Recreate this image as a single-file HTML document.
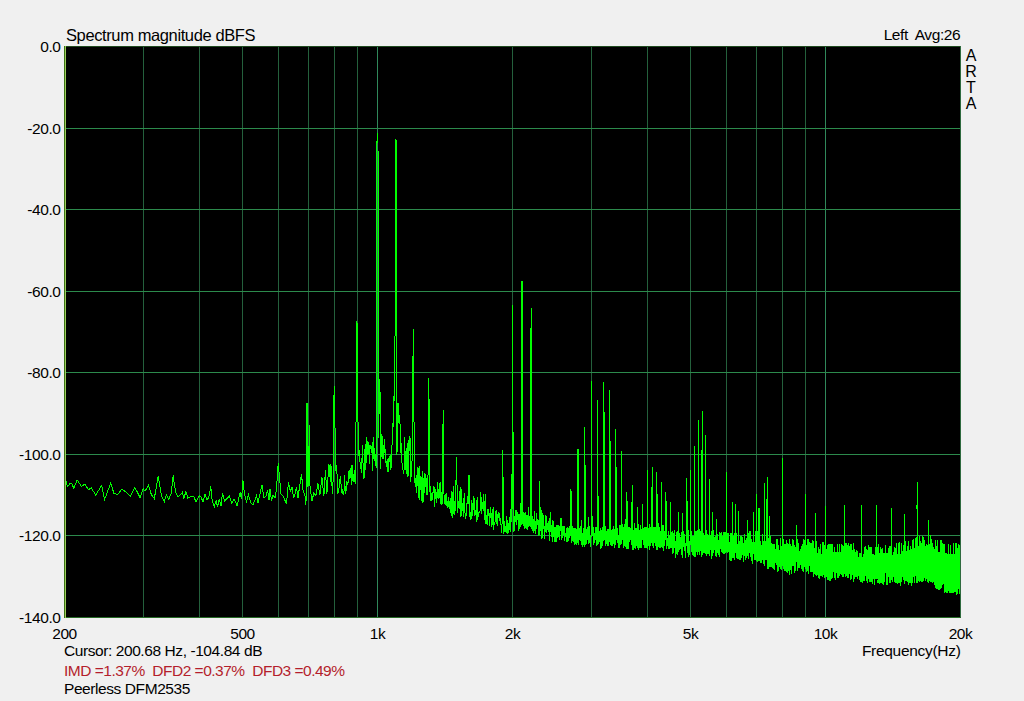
<!DOCTYPE html>
<html><head><meta charset="utf-8"><style>
html,body{margin:0;padding:0;background:#f0f0f0;width:1024px;height:701px;overflow:hidden}
body{position:relative;font-family:"Liberation Sans",sans-serif;font-size:15.5px;line-height:15.5px;letter-spacing:-0.42px;color:#000}
.t{position:absolute;white-space:pre}
.yl{position:absolute;right:963.5px;white-space:pre;text-align:right}
.xl{position:absolute;top:626.3px;width:80px;text-align:center}
.vg{stroke:#24603c;stroke-width:1}
.vd{stroke:#30885a;stroke-width:1}
.hg{stroke:#2c8a4c;stroke-width:1}
.tr{fill:none;stroke:#00ff00;stroke-width:1;shape-rendering:crispEdges}
</style></head><body>
<svg width="1024" height="701" viewBox="0 0 1024 701" style="position:absolute;left:0;top:0">
<rect x="64" y="46" width="897" height="572" fill="#000"/>
<line x1="143.5" y1="46" x2="143.5" y2="617" class="vg"/><line x1="199.5" y1="46" x2="199.5" y2="617" class="vg"/><line x1="242.5" y1="46" x2="242.5" y2="617" class="vg"/><line x1="278.5" y1="46" x2="278.5" y2="617" class="vg"/><line x1="308.5" y1="46" x2="308.5" y2="617" class="vg"/><line x1="334.5" y1="46" x2="334.5" y2="617" class="vg"/><line x1="357.5" y1="46" x2="357.5" y2="617" class="vg"/><line x1="377.5" y1="46" x2="377.5" y2="617" class="vd"/><line x1="512.5" y1="46" x2="512.5" y2="617" class="vg"/><line x1="591.5" y1="46" x2="591.5" y2="617" class="vg"/><line x1="647.5" y1="46" x2="647.5" y2="617" class="vg"/><line x1="690.5" y1="46" x2="690.5" y2="617" class="vg"/><line x1="726.5" y1="46" x2="726.5" y2="617" class="vg"/><line x1="756.5" y1="46" x2="756.5" y2="617" class="vg"/><line x1="782.5" y1="46" x2="782.5" y2="617" class="vg"/><line x1="805.5" y1="46" x2="805.5" y2="617" class="vg"/><line x1="825.5" y1="46" x2="825.5" y2="617" class="vd"/><line x1="64" y1="128.5" x2="961" y2="128.5" class="hg"/><line x1="64" y1="209.5" x2="961" y2="209.5" class="hg"/><line x1="64" y1="291.5" x2="961" y2="291.5" class="hg"/><line x1="64" y1="372.5" x2="961" y2="372.5" class="hg"/><line x1="64" y1="454.5" x2="961" y2="454.5" class="hg"/><line x1="64" y1="535.5" x2="961" y2="535.5" class="hg"/>
<rect x="64" y="46" width="897" height="1" fill="#1f4a1f"/>
<rect x="960" y="46" width="1" height="572" fill="#2f6a3f"/>
<rect x="64" y="617" width="897" height="1" fill="#266a26"/>
<rect x="64" y="46" width="1" height="572" fill="#3c7414"/><rect x="65" y="46" width="1" height="572" fill="#9ccc5c"/>
<g clip-path="url(#clp)"><path class="tr" d="M66.0,481.0 67.4,486.4 70.3,483.4 71.8,483.4 73.7,488.3 77.1,480.0 81.5,486.4 84.9,483.9 88.4,489.8 91.3,487.8 95.7,495.2 101.6,485.4 104.5,499.6 110.8,482.9 113.8,493.2 117.7,494.7 121.6,489.3 125.5,491.7 130.4,496.6 134.8,487.3 140.1,497.6 143.1,488.8 145.0,491.2 148.4,485.4 151.4,494.7 154.3,498.6 158.2,476.1 161.6,496.1 162.0,497.1 164.4,501.5 166.3,494.7 168.8,499.1 171.2,493.2 173.2,475.1 174.6,486.4 176.1,493.2 178.1,497.1 181.0,494.2 182.5,492.2 183.9,498.6 185.9,491.2 187.8,498.1 191.2,496.1 193.7,496.6 196.1,502.0 199.1,495.6 201.0,497.1 203.0,502.0 204.9,494.2 206.9,499.6 208.8,497.6 210.8,486.4 212.2,501.0 214.2,506.9 216.2,500.5 217.6,507.4 219.1,499.1 221.0,505.9 222.5,493.2 224.5,501.0 226.4,499.1 229.3,496.1 231.8,503.0 234.2,499.1 237.1,505.9 240.1,492.2 241.5,499.1 243.0,480.5 244.5,494.2 246.4,502.0 248.4,494.7 250.8,503.0 252.8,504.9 255.0,499.9 256.5,495.9 258.0,502.9 260.0,493.9 262.0,485.0 264.0,497.9 266.0,495.9 267.5,490.0 269.0,499.9 270.0,489.0 271.5,500.9 273.0,494.9 275.0,497.9 276.5,489.0 278.2,463.0 279.5,478.0 281.0,493.9 283.5,496.9 286.5,503.9 288.5,482.0 290.5,491.9 292.0,487.0 293.5,497.9 295.0,493.9 296.5,487.0 298.0,497.9 299.5,487.0 301.5,474.0 303.0,490.0 305.0,495.9 305.9,504.9 306.6,484.0 307.0,403.0 307.4,487.0 308.7,484.0 309.2,425.0 309.7,484.0 310.9,492.9 311.9,500.9 313.9,492.9 315.9,495.9 317.9,483.0 319.9,494.9 321.9,477.0 323.9,495.9 325.4,470.0 326.9,493.9 328.9,464.0 330.4,482.0 330.9,464.0 332.4,493.9 333.2,478.0 333.5,419.7 334.2,386.5 334.9,420.0 335.6,471.4 336.3,464.8 337.0,473.8 337.7,493.5 338.4,491.9 339.1,487.5 339.8,480.9 340.5,476.1 341.2,486.4 341.9,491.6 342.5,490.4 343.2,495.0 343.9,494.4 344.6,474.8 345.3,493.3 345.9,492.8 346.6,481.5 347.3,482.4 347.9,484.5 348.6,472.0 349.3,470.4 349.9,478.7 350.6,474.2 351.2,464.7 351.9,485.3 352.5,465.3 353.2,482.1 353.8,474.9 354.5,470.4 355.1,484.1 355.7,463.5 356.4,373.9 357.0,321.4 357.6,372.6 358.3,455.7 358.9,452.3 359.5,450.5 360.2,465.9 360.8,466.9 361.4,472.9 362.0,457.6 362.6,444.9 363.2,470.4 363.9,477.7 364.5,477.3 365.1,443.7 365.7,470.0 366.3,456.9 366.9,437.1 367.5,454.9 368.1,447.3 368.7,442.0 369.3,464.0 369.9,444.6 370.5,448.1 371.1,447.8 371.7,452.9 372.2,441.9 372.8,470.6 373.4,437.0 374.0,447.9 374.6,448.5 375.2,466.2 375.7,454.0 376.3,467.7 376.9,143.0 377.4,133.0 378.0,143.0 378.6,437.7 379.2,403.1 379.7,379.0 380.3,403.6 380.8,469.0 381.4,433.7 382.0,435.8 382.5,458.5 383.1,445.1 383.6,459.0 384.2,449.5 384.7,439.5 385.3,457.4 385.8,460.4 386.4,467.2 386.9,460.9 387.5,459.8 388.0,472.2 388.5,458.3 389.1,459.9 389.6,461.6 390.1,455.2 390.7,469.8 391.2,467.4 391.7,465.1 392.3,426.0 392.8,423.1 393.3,427.3 393.9,401.2 394.4,379.6 394.9,400.5 395.4,144.0 395.9,139.0 396.5,144.0 397.0,454.5 397.5,413.0 398.0,402.7 398.5,414.2 399.0,422.7 399.5,414.7 400.0,423.9 400.6,424.6 401.1,457.9 401.6,443.4 402.1,467.0 402.6,468.9 403.1,470.7 403.6,473.5 404.1,469.5 404.6,437.5 405.1,463.6 405.6,451.2 406.1,473.6 406.5,448.3 407.0,453.4 407.5,443.5 408.0,477.1 408.5,459.2 409.0,440.4 409.5,450.7 410.0,436.2 410.4,478.3 410.9,482.2 411.4,462.8 411.9,466.8 412.4,443.4 412.8,376.7 413.3,329.1 413.8,377.8 414.2,461.4 414.7,478.8 415.2,486.2 415.7,486.4 416.1,475.1 416.6,493.1 417.1,484.9 417.5,480.6 418.0,466.9 418.5,497.9 418.9,482.6 419.4,499.6 419.8,466.0 420.3,488.5 420.8,479.6 421.2,500.3 421.7,500.4 422.1,470.8 422.6,489.7 423.0,503.3 423.5,477.6 423.9,494.3 424.4,487.1 424.8,473.2 425.3,482.1 425.7,474.1 426.2,494.5 426.6,478.3 427.0,483.7 427.5,494.9 427.9,492.9 428.4,417.9 428.8,378.0 429.2,418.2 429.7,482.9 430.1,494.9 430.5,485.8 431.0,501.2 431.4,499.4 431.8,492.6 432.3,499.6 432.7,492.7 433.1,492.6 433.6,486.8 434.0,487.3 434.4,494.2 434.8,507.3 435.3,488.9 435.7,497.9 436.1,493.6 436.5,502.8 437.0,492.5 437.4,498.2 437.8,482.2 438.2,495.4 438.6,498.3 439.0,497.9 439.5,482.6 439.9,484.1 440.3,483.4 440.7,503.5 441.1,492.4 441.5,497.1 441.9,504.6 442.3,501.0 442.8,441.8 443.2,410.0 443.6,441.9 444.0,494.3 444.4,503.7 444.8,496.2 445.2,494.1 445.6,504.6 446.0,498.4 446.4,492.8 446.8,505.8 447.2,501.4 447.6,506.8 448.0,507.6 448.4,497.4 448.8,500.3 449.2,501.9 449.6,509.4 450.0,503.0 450.4,513.2 450.7,498.5 451.1,503.8 451.5,516.0 451.9,492.2 452.3,492.4 452.7,518.0 453.1,511.7 453.5,514.0 453.8,486.4 454.2,514.8 454.6,500.6 455.0,505.6 455.4,510.8 455.8,494.4 456.1,474.0 456.5,456.8 456.9,474.1 457.3,513.4 457.7,486.1 458.0,501.4 458.4,501.7 458.8,507.6 459.2,508.9 459.5,507.1 459.9,491.0 460.3,516.8 460.7,488.4 461.0,488.8 461.4,505.4 461.8,516.0 462.1,509.8 462.5,510.7 462.9,503.1 463.3,517.4 463.6,497.8 464.0,514.1 464.3,492.9 464.7,500.6 465.1,516.7 465.4,513.0 465.8,519.2 466.2,507.7 466.5,516.2 466.9,503.2 467.2,503.1 467.6,496.9 468.0,496.8 468.3,503.6 468.7,486.0 469.0,474.8 469.4,486.0 469.7,517.0 470.1,512.4 470.5,517.3 470.8,519.6 471.2,517.6 471.5,500.2 471.9,510.8 472.2,515.3 472.6,515.3 472.9,503.3 473.3,506.8 473.6,496.1 474.0,510.3 474.3,497.8 474.7,516.1 475.0,509.7 475.3,514.0 475.7,513.2 476.0,512.1 476.4,522.1 476.7,509.2 477.1,497.5 477.4,519.9 477.7,503.0 478.1,517.2 478.4,514.2 478.8,513.1 479.1,511.5 479.4,512.6 479.8,512.2 480.1,511.0 480.5,498.6 480.8,492.0 481.1,498.8 481.5,508.4 481.8,513.8 482.1,502.4 482.5,506.3 482.8,503.1 483.1,510.8 483.5,499.6 483.8,494.3 484.1,503.7 484.4,519.6 484.8,506.0 485.1,510.8 485.4,494.5 485.8,523.9 486.1,515.7 486.4,524.3 486.7,522.2 487.1,513.0 487.4,518.2 487.7,525.2 488.0,508.8 488.4,511.9 488.7,515.6 489.0,513.5 489.3,514.2 489.6,526.4 490.0,517.7 490.3,514.3 490.6,513.8 490.9,506.9 491.2,523.4 491.6,512.6 491.9,527.2 492.2,521.1 492.5,513.6 492.8,509.1 493.1,508.6 493.5,521.2 493.8,529.9 494.1,523.0 494.4,523.5 494.7,522.7 495.0,522.5 495.3,519.3 495.6,515.0 496.0,511.4 496.3,511.2 496.6,516.9 496.9,524.2 497.2,520.0 497.5,513.8 497.8,525.9 498.1,514.7 498.4,513.7 498.7,515.0 499.0,517.0 499.3,520.6 499.6,513.8 499.9,513.6 500.2,524.2 500.6,523.3 500.9,524.7 501.2,526.6 501.5,533.2 501.8,530.4 502.1,521.2 502.4,475.4 502.7,450.0 503.0,475.5 503.3,511.8 503.6,534.4 503.9,516.0 504.2,527.7 504.5,522.3 504.7,526.6 505.0,532.3 505.3,529.0 505.6,526.0 505.9,526.9 506.2,525.4 506.5,533.0 506.8,516.1 507.1,521.5 507.4,533.5 507.7,527.0 508.0,522.9 508.3,524.7 508.6,532.6 508.9,525.7 509.1,529.5 509.4,521.1 509.7,519.1 510.0,516.8 510.3,532.3 510.6,516.0 510.9,520.2 511.2,491.2 511.5,474.0 511.7,491.1 512.0,521.5 512.3,381.5 512.6,305.5 512.9,381.4 513.2,516.5 513.4,519.2 513.7,531.6 514.0,519.9 514.3,527.6 514.6,531.4 514.9,516.3 515.1,521.6 515.4,515.8 515.7,512.8 516.0,510.1 516.3,516.1 516.5,519.8 516.8,524.7 517.1,517.5 517.4,512.5 517.7,517.1 517.9,516.2 518.2,514.5 518.5,528.2 518.8,530.5 519.0,513.6 519.3,522.0 519.6,523.8 519.9,529.3 520.1,522.3 520.4,503.2 520.7,514.5 521.0,526.5 521.2,515.9 521.5,523.2 521.8,364.6 522.0,281.0 522.3,364.6 522.6,518.9 522.9,520.1 523.1,525.9 523.4,512.5 523.7,524.4 523.9,519.3 524.2,513.0 524.5,519.5 524.7,524.0 525.0,529.0 525.3,517.6 525.5,525.6 525.8,511.7 526.1,527.8 526.3,522.3 526.6,529.3 526.9,514.7 527.1,515.7 527.4,515.0 527.7,529.6 527.9,519.9 528.2,507.1 528.5,518.7 528.7,527.2 529.0,526.3 529.2,525.2 529.5,516.4 529.8,522.3 530.0,516.7 530.3,516.8 530.5,526.7 530.8,383.2 531.1,307.7 531.3,383.3 531.6,518.2 531.8,522.2 532.1,531.4 532.4,521.0 532.6,517.7 532.9,518.3 533.1,520.2 533.4,522.0 533.6,523.7 533.9,532.5 534.1,511.1 534.4,518.4 534.7,531.3 534.9,521.4 535.2,521.6 535.4,534.0 535.7,527.9 535.9,527.0 536.2,529.0 536.4,513.4 536.7,527.0 536.9,520.5 537.2,520.8 537.4,523.5 537.7,524.5 537.9,519.8 538.2,520.1 538.4,534.7 538.7,534.4 538.9,535.5 539.2,534.6 539.4,497.1 539.7,480.8 539.9,497.2 540.2,525.8 540.4,526.1 540.7,530.2 540.9,530.9 541.2,527.3 541.4,521.9 541.6,510.1 541.9,538.7 542.1,537.4 542.4,532.2 542.6,513.5 542.9,534.9 543.1,515.4 543.4,527.5 543.6,529.2 543.8,519.2 544.1,529.0 544.3,531.4 544.6,528.5 544.8,539.0 545.1,529.3 545.3,523.2 545.5,520.1 545.8,530.0 546.0,515.3 546.3,531.4 546.5,533.4 546.7,521.5 547.0,530.8 547.2,524.9 547.4,525.2 547.7,523.4 547.9,528.7 548.2,525.3 548.4,525.4 548.6,528.1 548.9,521.0 549.1,540.8 549.3,535.8 549.6,528.2 549.8,533.4 550.1,512.2 550.3,532.1 550.5,521.3 550.8,530.9 551.0,532.4 551.2,528.7 551.5,537.3 551.7,525.5 551.9,532.8 552.2,536.2 552.4,536.0 552.6,520.0 552.9,542.3 553.1,520.6 553.3,537.3 553.5,526.7 553.8,532.9 554.0,528.3 554.2,542.3 554.5,535.3 554.7,526.9 554.9,538.8 555.2,540.6 555.4,526.6 555.6,533.9 555.8,542.0 556.1,533.1 556.3,535.3 556.5,541.9 556.7,532.8 557.0,525.0 557.2,526.7 557.4,533.9 557.7,538.1 557.9,527.5 558.1,524.7 558.3,536.8 558.6,531.9 558.8,530.2 559.0,527.9 559.2,540.1 559.5,528.3 559.7,525.6 559.9,527.6 560.1,530.9 560.3,526.0 560.6,530.6 560.8,525.2 561.0,517.8 561.2,539.2 561.5,539.1 561.7,534.6 561.9,535.8 562.1,526.5 562.3,538.0 562.6,537.3 562.8,535.2 563.0,535.2 563.2,527.9 563.4,531.3 563.7,526.4 563.9,531.3 564.1,532.6 564.3,530.4 564.5,540.6 564.8,526.5 565.0,536.0 565.2,535.3 565.4,533.1 565.6,537.4 565.8,536.5 566.1,532.1 566.3,541.8 566.5,533.5 566.7,537.9 566.9,528.4 567.1,529.1 567.4,535.4 567.6,542.2 567.8,527.1 568.0,527.5 568.2,530.0 568.4,532.0 568.6,534.9 568.9,540.7 569.1,533.6 569.3,538.1 569.5,534.9 569.7,531.4 569.9,532.0 570.1,520.8 570.3,536.0 570.6,519.5 570.8,505.0 571.0,489.3 571.2,505.1 571.4,530.7 571.6,537.4 571.8,537.1 572.0,543.1 572.2,529.3 572.4,529.6 572.7,526.4 572.9,527.6 573.1,528.9 573.3,537.1 573.5,533.6 573.7,531.9 573.9,542.1 574.1,534.6 574.3,537.5 574.5,544.7 574.7,533.3 574.9,527.7 575.1,528.4 575.4,528.7 575.6,542.5 575.8,543.6 576.0,540.4 576.2,545.1 576.4,534.4 576.6,529.4 576.8,531.1 577.0,537.2 577.2,533.7 577.4,543.0 577.6,528.5 577.8,479.3 578.0,449.0 578.2,479.3 578.4,544.2 578.6,544.2 578.8,538.8 579.0,539.4 579.2,539.9 579.4,536.6 579.6,528.2 579.8,528.2 580.0,539.7 580.2,528.2 580.4,526.5 580.6,541.1 580.8,538.1 581.0,538.5 581.2,540.4 581.4,532.6 581.6,544.5 581.8,519.8 582.0,530.6 582.2,544.6 582.4,546.8 582.6,538.2 582.8,543.6 583.0,544.7 583.2,536.0 583.4,536.8 583.6,527.8 583.8,536.4 584.0,544.8 584.2,531.4 584.4,546.6 584.6,464.9 584.8,427.0 585.0,464.9 585.2,536.3 585.4,538.0 585.6,527.6 585.8,538.9 586.0,544.5 586.2,541.6 586.4,531.3 586.6,541.5 586.8,532.9 587.0,528.9 587.2,527.4 587.4,527.4 587.6,534.0 587.7,540.1 587.9,527.3 588.1,527.3 588.3,543.9 588.5,529.9 588.7,517.3 588.9,538.8 589.1,526.2 589.3,542.4 589.5,543.0 589.7,527.1 589.9,534.4 590.1,545.4 590.2,546.9 590.4,539.0 590.6,538.4 590.8,545.5 591.0,545.1 591.2,434.8 591.4,380.8 591.6,434.8 591.8,536.8 592.0,536.0 592.1,533.1 592.3,529.6 592.5,515.9 592.7,533.5 592.9,531.0 593.1,537.6 593.3,537.1 593.5,526.7 593.7,544.5 593.8,529.1 594.0,538.0 594.2,543.3 594.4,533.0 594.6,537.2 594.8,540.8 595.0,539.9 595.2,536.3 595.3,527.5 595.5,529.8 595.7,536.3 595.9,534.1 596.1,534.1 596.3,532.5 596.5,526.7 596.6,540.6 596.8,529.0 597.0,546.0 597.2,527.5 597.4,541.9 597.6,447.5 597.7,400.3 597.9,447.5 598.1,533.7 598.3,543.5 598.5,526.7 598.7,527.1 598.8,542.1 599.0,533.2 599.2,542.2 599.4,536.7 599.6,531.3 599.8,533.6 599.9,541.7 600.1,532.9 600.3,545.7 600.5,548.5 600.7,528.2 600.8,527.9 601.0,529.6 601.2,540.8 601.4,546.0 601.6,534.9 601.7,542.1 601.9,547.6 602.1,530.3 602.3,537.1 602.5,546.0 602.6,535.2 602.8,527.9 603.0,528.0 603.2,536.4 603.4,540.9 603.5,534.6 603.7,435.8 603.9,382.0 604.1,435.8 604.3,540.1 604.4,528.2 604.6,533.0 604.8,527.1 605.0,536.7 605.1,527.5 605.3,534.4 605.5,533.8 605.7,528.5 605.8,526.4 606.0,545.7 606.2,533.5 606.4,531.3 606.6,535.5 606.7,534.0 606.9,536.4 607.1,540.1 607.3,528.8 607.4,534.8 607.6,546.0 607.8,536.1 608.0,537.6 608.1,539.0 608.3,531.9 608.5,529.0 608.7,546.0 608.8,528.6 609.0,530.9 609.2,542.3 609.3,534.6 609.5,527.6 609.7,441.4 609.9,390.3 610.0,441.4 610.2,521.2 610.4,537.8 610.6,535.5 610.7,544.9 610.9,541.4 611.1,534.8 611.2,529.6 611.4,530.6 611.6,544.7 611.8,531.7 611.9,546.1 612.1,535.9 612.3,529.4 612.4,534.5 612.6,545.9 612.8,533.4 612.9,529.5 613.1,541.7 613.3,533.8 613.5,543.7 613.6,526.4 613.8,542.1 614.0,529.0 614.1,539.1 614.3,541.8 614.5,542.8 614.6,546.6 614.8,547.6 615.0,537.5 615.1,528.8 615.3,527.3 615.5,544.5 615.7,466.8 615.8,429.4 616.0,466.8 616.2,535.3 616.3,529.2 616.5,540.2 616.7,536.6 616.8,539.4 617.0,528.4 617.2,535.8 617.3,542.8 617.5,528.3 617.7,532.9 617.8,536.4 618.0,542.6 618.2,541.1 618.3,541.3 618.5,547.7 618.6,542.4 618.8,536.0 619.0,536.3 619.1,528.9 619.3,535.6 619.5,524.9 619.6,547.6 619.8,529.2 620.0,538.9 620.1,535.0 620.3,537.4 620.5,544.8 620.6,536.7 620.8,530.5 620.9,525.0 621.1,544.1 621.3,480.6 621.4,450.8 621.6,480.6 621.8,527.5 621.9,533.7 622.1,528.4 622.2,539.6 622.4,527.2 622.6,523.6 622.7,524.7 622.9,533.1 623.1,528.2 623.2,545.6 623.4,542.2 623.5,543.8 623.7,527.0 623.9,530.9 624.0,548.4 624.2,531.0 624.3,533.8 624.5,538.2 624.7,524.0 624.8,535.8 625.0,526.7 625.1,541.5 625.3,528.3 625.5,544.7 625.6,547.0 625.8,528.7 625.9,519.5 626.1,548.8 626.3,515.5 626.4,544.9 626.6,533.3 626.7,507.2 626.9,492.0 627.1,507.2 627.2,540.2 627.4,548.5 627.5,526.4 627.7,533.0 627.8,533.3 628.0,527.5 628.2,527.7 628.3,541.0 628.5,530.6 628.6,548.8 628.8,534.6 628.9,533.8 629.1,532.0 629.3,542.0 629.4,540.1 629.6,530.1 629.7,526.9 629.9,534.8 630.0,531.2 630.2,537.6 630.3,528.0 630.5,539.8 630.7,528.9 630.8,539.5 631.0,535.8 631.1,544.7 631.3,536.6 631.4,542.3 631.6,535.4 631.7,536.1 631.9,532.6 632.0,502.8 632.2,485.0 632.4,502.8 632.5,548.5 632.7,549.7 632.8,548.4 633.0,548.4 633.1,539.8 633.3,530.5 633.4,536.3 633.6,550.2 633.7,537.5 633.9,545.8 634.0,535.4 634.2,523.3 634.3,544.6 634.5,548.4 634.7,540.4 634.8,539.8 635.0,542.1 635.1,537.5 635.3,545.1 635.4,534.1 635.6,548.2 635.7,548.2 635.9,532.4 636.0,528.2 636.2,532.0 636.3,540.9 636.5,534.9 636.6,546.1 636.8,535.8 636.9,531.1 637.1,548.3 637.2,517.2 637.4,507.0 637.5,517.2 637.7,537.3 637.8,528.6 638.0,524.5 638.1,537.3 638.3,537.2 638.4,549.6 638.6,537.9 638.7,539.6 638.9,528.8 639.0,544.7 639.2,537.3 639.3,541.4 639.5,547.8 639.6,530.3 639.8,531.9 639.9,532.2 640.1,538.6 640.2,531.9 640.3,532.8 640.5,547.7 640.6,536.8 640.8,541.0 640.9,525.2 641.1,547.7 641.2,529.5 641.4,529.1 641.5,543.3 641.7,530.6 641.8,534.4 642.0,535.9 642.1,539.7 642.3,515.4 642.4,504.0 642.6,515.4 642.7,537.8 642.8,536.8 643.0,540.1 643.1,534.7 643.3,532.2 643.4,528.8 643.6,528.0 643.7,545.1 643.9,536.0 644.0,529.3 644.2,547.5 644.3,546.0 644.4,542.1 644.6,526.8 644.7,538.7 644.9,547.5 645.0,530.8 645.2,543.1 645.3,543.2 645.5,547.5 645.6,537.8 645.7,547.5 645.9,541.1 646.0,526.8 646.2,531.4 646.3,528.0 646.5,530.8 646.6,536.5 646.7,547.5 646.9,532.3 647.0,541.9 647.2,493.4 647.3,470.5 647.5,493.4 647.6,533.6 647.7,547.5 647.9,541.5 648.0,548.6 648.2,531.2 648.3,528.5 648.5,540.7 648.6,535.2 648.7,528.4 648.9,544.0 649.0,539.8 649.2,528.5 649.3,550.3 649.4,541.7 649.6,541.5 649.7,532.2 649.9,524.2 650.0,536.8 650.1,531.5 650.3,537.2 650.4,527.4 650.6,545.7 650.7,542.5 650.8,528.0 651.0,529.9 651.1,543.2 651.3,539.8 651.4,531.6 651.5,534.6 651.7,516.4 651.8,527.8 652.0,490.9 652.1,467.0 652.2,490.8 652.4,536.1 652.5,527.2 652.7,526.6 652.8,540.6 652.9,545.8 653.1,533.6 653.2,537.8 653.3,540.8 653.5,534.9 653.6,537.5 653.8,547.5 653.9,527.4 654.0,539.6 654.2,534.1 654.3,530.0 654.5,526.9 654.6,540.2 654.7,543.2 654.9,532.5 655.0,542.0 655.1,527.2 655.3,538.8 655.4,542.5 655.5,540.8 655.7,526.6 655.8,531.2 656.0,545.8 656.1,547.7 656.2,547.5 656.4,543.1 656.5,531.6 656.6,549.8 656.8,493.9 656.9,472.0 657.0,493.9 657.2,534.7 657.3,546.8 657.5,532.2 657.6,549.8 657.7,538.4 657.9,533.0 658.0,523.5 658.1,533.8 658.3,541.0 658.4,532.9 658.5,537.0 658.7,536.0 658.8,540.3 658.9,544.5 659.1,548.2 659.2,540.6 659.3,527.2 659.5,536.6 659.6,537.1 659.7,547.8 659.9,547.8 660.0,536.6 660.1,536.6 660.3,547.7 660.4,541.6 660.5,547.9 660.7,533.9 660.8,545.8 660.9,535.4 661.1,528.5 661.2,543.5 661.3,500.5 661.5,481.6 661.6,500.6 661.7,546.7 661.9,530.4 662.0,529.2 662.1,548.2 662.3,545.8 662.4,539.8 662.5,529.4 662.7,544.5 662.8,548.3 662.9,525.5 663.1,524.8 663.2,534.4 663.3,542.2 663.4,539.1 663.6,550.9 663.7,535.3 663.8,545.3 664.0,533.0 664.1,541.2 664.2,545.8 664.4,544.2 664.5,530.8 664.6,543.2 664.8,533.5 664.9,531.0 665.0,541.7 665.1,531.2 665.3,538.7 665.4,528.6 665.5,529.5 665.7,539.5 665.8,508.0 665.9,492.0 666.1,508.1 666.2,546.6 666.3,535.0 666.4,549.1 666.6,539.9 666.7,541.1 666.8,541.9 667.0,539.4 667.1,538.6 667.2,544.1 667.3,537.9 667.5,543.9 667.6,545.5 667.7,538.4 667.9,539.8 668.0,544.6 668.1,541.6 668.2,545.4 668.4,531.5 668.5,540.3 668.6,541.0 668.8,544.0 668.9,548.9 669.0,533.9 669.1,539.9 669.3,540.5 669.4,538.4 669.5,540.2 669.6,549.4 669.8,548.7 669.9,539.8 670.0,535.3 670.2,515.6 670.3,502.0 670.4,515.6 670.5,544.8 670.7,546.1 670.8,547.5 670.9,541.2 671.0,546.8 671.2,543.2 671.3,532.4 671.4,545.7 671.5,547.9 671.7,544.6 671.8,543.2 671.9,546.0 672.0,532.7 672.2,542.9 672.3,547.0 672.4,554.0 672.5,541.6 672.7,531.1 672.8,534.8 672.9,543.9 673.0,534.5 673.2,536.9 673.3,537.0 673.4,550.2 673.5,538.1 673.7,549.9 673.8,553.0 673.9,537.4 674.0,533.1 674.2,546.5 674.3,544.4 674.4,534.5 674.5,529.6 674.7,534.5 674.8,534.2 674.9,548.0 675.0,539.4 675.2,554.1 675.3,552.6 675.4,558.2 675.5,548.4 675.6,551.3 675.8,555.3 675.9,545.9 676.0,542.8 676.1,554.4 676.3,544.4 676.4,531.6 676.5,543.3 676.6,543.6 676.8,548.0 676.9,532.9 677.0,542.0 677.1,555.3 677.2,543.9 677.4,550.2 677.5,541.2 677.6,542.9 677.7,543.1 677.9,531.4 678.0,547.2 678.1,547.5 678.2,546.4 678.3,551.5 678.5,551.4 678.6,523.3 678.7,512.5 678.8,523.3 678.9,550.3 679.1,549.2 679.2,544.4 679.3,544.5 679.4,546.7 679.6,549.0 679.7,533.4 679.8,540.7 679.9,544.0 680.0,546.7 680.2,542.6 680.3,543.8 680.4,541.7 680.5,549.1 680.6,536.9 680.8,546.1 680.9,542.4 681.0,546.3 681.1,547.2 681.2,536.8 681.4,552.4 681.5,550.2 681.6,555.0 681.7,531.9 681.8,535.8 682.0,549.2 682.1,555.1 682.2,538.6 682.3,545.6 682.4,558.1 682.5,551.1 682.7,523.5 682.8,513.0 682.9,523.5 683.0,545.1 683.1,545.1 683.3,541.9 683.4,531.5 683.5,545.9 683.6,543.6 683.7,543.5 683.9,539.6 684.0,546.6 684.1,536.3 684.2,547.5 684.3,544.7 684.4,544.2 684.6,537.0 684.7,547.9 684.8,550.9 684.9,533.8 685.0,542.6 685.1,549.4 685.3,558.0 685.4,543.5 685.5,555.3 685.6,553.0 685.7,554.5 685.9,548.3 686.0,548.2 686.1,540.3 686.2,544.4 686.3,546.2 686.4,532.2 686.6,543.0 686.7,541.1 686.8,500.7 686.9,478.0 687.0,500.7 687.1,546.5 687.2,542.4 687.4,545.8 687.5,536.3 687.6,534.3 687.7,549.0 687.8,552.5 687.9,544.6 688.1,555.3 688.2,556.9 688.3,536.2 688.4,530.2 688.5,533.0 688.6,537.9 688.8,544.9 688.9,532.8 689.0,544.0 689.1,554.4 689.2,549.0 689.3,549.4 689.4,547.1 689.6,555.3 689.7,553.3 689.8,541.8 689.9,548.9 690.0,541.5 690.1,544.7 690.2,545.2 690.4,537.7 690.5,536.0 690.6,538.7 690.7,495.7 690.8,470.5 690.9,495.7 691.0,536.0 691.2,531.0 691.3,542.6 691.4,549.9 691.5,545.6 691.6,531.8 691.7,542.2 691.8,547.0 692.0,551.9 692.1,547.2 692.2,545.0 692.3,544.1 692.4,554.6 692.5,540.9 692.6,542.9 692.7,547.6 692.9,552.9 693.0,535.9 693.1,555.6 693.2,552.2 693.3,547.0 693.4,535.8 693.5,541.4 693.6,544.7 693.8,547.2 693.9,538.4 694.0,544.1 694.1,549.6 694.2,530.2 694.3,556.5 694.4,542.8 694.5,479.8 694.7,446.0 694.8,479.8 694.9,549.8 695.0,540.9 695.1,557.4 695.2,542.6 695.3,540.3 695.4,548.7 695.5,542.2 695.7,536.4 695.8,548.9 695.9,531.9 696.0,530.7 696.1,547.7 696.2,551.6 696.3,540.1 696.4,549.0 696.5,534.2 696.7,545.7 696.8,544.8 696.9,542.7 697.0,546.6 697.1,545.6 697.2,549.3 697.3,529.8 697.4,539.7 697.5,555.3 697.6,551.7 697.8,538.8 697.9,544.6 698.0,545.4 698.1,552.1 698.2,539.8 698.3,462.8 698.4,420.0 698.5,462.8 698.6,531.7 698.7,538.2 698.9,538.8 699.0,541.9 699.1,529.3 699.2,541.8 699.3,540.0 699.4,535.4 699.5,543.7 699.6,555.3 699.7,554.9 699.8,552.0 699.9,543.0 700.1,548.3 700.2,531.2 700.3,542.6 700.4,546.2 700.5,551.2 700.6,542.4 700.7,541.5 700.8,545.1 700.9,536.7 701.0,550.2 701.1,555.8 701.2,552.1 701.4,549.7 701.5,556.9 701.6,543.9 701.7,539.9 701.8,531.5 701.9,555.3 702.0,456.7 702.1,410.7 702.2,456.7 702.3,539.2 702.4,555.3 702.5,541.4 702.6,544.6 702.8,547.7 702.9,550.6 703.0,549.9 703.1,543.8 703.2,532.9 703.3,535.2 703.4,542.3 703.5,552.5 703.6,540.7 703.7,548.8 703.8,549.3 703.9,546.2 704.0,542.0 704.1,542.0 704.2,544.9 704.4,535.1 704.5,553.3 704.6,539.1 704.7,541.6 704.8,541.6 704.9,543.5 705.0,547.4 705.1,552.2 705.2,546.5 705.3,554.3 705.4,543.1 705.5,549.2 705.6,472.2 705.7,434.7 705.8,472.3 705.9,539.4 706.0,552.9 706.2,530.5 706.3,546.3 706.4,543.3 706.5,550.2 706.6,530.4 706.7,549.6 706.8,550.8 706.9,555.5 707.0,545.0 707.1,534.3 707.2,549.1 707.3,536.3 707.4,538.2 707.5,542.5 707.6,552.2 707.7,553.9 707.8,544.2 707.9,548.1 708.0,546.9 708.1,535.5 708.2,551.9 708.4,553.7 708.5,535.5 708.6,540.4 708.7,545.2 708.8,545.2 708.9,551.7 709.0,552.4 709.1,533.7 709.2,501.2 709.3,479.0 709.4,501.2 709.5,547.2 709.6,532.6 709.7,542.3 709.8,555.8 709.9,547.0 710.0,545.9 710.1,550.3 710.2,542.4 710.3,547.7 710.4,535.9 710.5,535.3 710.6,543.9 710.7,543.4 710.8,544.0 710.9,542.4 711.0,549.3 711.1,558.6 711.2,543.3 711.3,551.9 711.5,548.2 711.6,558.9 711.7,538.7 711.8,546.5 711.9,530.6 712.0,541.1 712.1,536.2 712.2,551.6 712.3,552.6 712.4,545.0 712.5,552.3 712.6,556.1 712.7,522.9 712.8,512.0 712.9,522.9 713.0,552.3 713.1,541.7 713.2,544.7 713.3,553.4 713.4,552.0 713.5,530.3 713.6,541.4 713.7,548.9 713.8,543.4 713.9,551.6 714.0,549.3 714.1,550.4 714.2,545.7 714.3,547.4 714.4,548.7 714.5,545.5 714.6,548.4 714.7,541.5 714.8,540.3 714.9,537.5 715.0,546.0 715.1,551.3 715.2,549.1 715.3,556.4 715.4,536.3 715.5,547.1 715.6,546.0 715.7,548.1 715.8,550.0 715.9,554.2 716.0,553.6 716.1,556.5 716.2,527.6 716.3,519.0 716.4,527.6 716.5,540.6 716.6,551.5 716.7,541.6 716.8,544.0 716.9,553.6 717.0,543.9 717.1,552.8 717.2,550.5 717.3,534.2 717.4,551.1 717.5,550.4 717.6,548.0 717.7,543.9 717.8,551.7 717.9,545.6 718.0,547.0 718.1,549.6 718.2,546.8 718.3,548.7 718.4,548.9 718.5,548.8 718.6,548.1 718.7,554.6 718.8,544.9 718.9,545.2 719.0,540.9 719.1,537.5 719.2,532.0 719.3,550.0 719.4,555.0 719.5,540.0 719.6,543.5 719.7,544.6 719.8,556.9 719.9,552.3 720.0,546.6 720.1,547.4 720.2,549.2 720.3,541.8 720.4,549.4 720.5,542.0 720.6,548.1 720.7,533.3 720.8,549.1 720.9,544.0 721.0,546.2 721.1,551.8 721.1,545.0 721.2,540.6 721.3,546.2 721.4,532.3 721.5,546.6 721.6,547.6 721.7,545.8 721.8,545.8 721.9,552.3 722.0,550.6 722.1,552.6 722.2,548.0 722.3,545.7 722.4,535.6 722.5,540.1 722.6,541.8 722.7,552.0 722.8,545.1 722.9,544.2 723.0,542.0 723.1,532.7 723.2,541.5 723.3,554.0 723.4,548.7 723.5,538.6 723.6,545.0 723.7,542.4 723.8,550.5 723.9,550.4 724.0,532.0 724.1,544.4 724.1,550.0 724.2,544.4 724.3,532.2 724.4,544.3 724.5,549.5 724.6,538.1 724.7,549.7 724.8,544.5 724.9,549.1 725.0,553.5 725.1,546.8 725.2,538.2 725.3,538.2 725.4,548.2 725.5,543.1 725.6,541.7 725.7,553.0 725.8,546.5 725.9,532.4 726.0,552.5 726.1,545.7 726.2,497.5 726.3,472.0 726.3,497.5 726.4,547.5 726.5,538.0 726.6,552.1 726.7,546.8 726.8,532.6 726.9,546.6 727.0,533.1 727.1,551.6 727.2,553.0 727.3,537.5 727.4,542.3 727.5,549.5 727.6,541.4 727.7,547.2 727.8,538.5 727.9,546.0 728.0,545.4 728.0,546.1 728.1,544.4 728.2,533.4 728.3,552.4 728.4,533.5 728.5,546.4 728.6,546.2 728.7,544.3 728.8,533.8 728.9,546.9 729.0,546.9 729.1,559.8 729.2,549.1 729.3,552.3 729.4,544.5 729.5,546.6 729.5,550.8 729.6,549.0 729.7,543.7 729.8,541.8 729.9,551.3 730.0,542.4 730.1,550.1 730.2,542.8 730.3,560.8 730.4,532.8 730.5,557.5 730.6,552.0 730.7,555.4 730.8,554.6 730.9,550.9 730.9,538.0 731.0,558.2 731.1,534.2 731.2,549.3 731.3,541.3 731.4,561.0 731.5,533.1 731.6,544.7 731.7,549.1 731.8,546.9 731.9,546.6 732.0,551.7 732.1,558.3 732.1,544.6 732.2,539.5 732.3,550.9 732.4,542.8 732.5,517.2 732.6,502.0 732.7,517.2 732.8,558.4 732.9,545.5 733.0,558.4 733.1,549.4 733.2,546.8 733.2,554.4 733.3,535.7 733.4,547.4 733.5,546.9 733.6,558.3 733.7,553.2 733.8,538.9 733.9,547.7 734.0,544.4 734.1,545.5 734.2,559.7 734.3,546.1 734.3,546.5 734.4,558.6 734.5,540.1 734.6,549.5 734.7,533.1 734.8,541.1 734.9,542.7 735.0,542.7 735.1,553.2 735.2,543.0 735.3,551.3 735.3,542.4 735.4,542.1 735.5,551.1 735.6,518.6 735.7,504.0 735.8,518.6 735.9,550.0 736.0,543.6 736.1,542.6 736.2,543.0 736.2,550.3 736.3,539.1 736.4,558.0 736.5,557.2 736.6,533.4 736.7,547.6 736.8,545.2 736.9,537.7 737.0,542.9 737.1,558.9 737.1,545.5 737.2,555.1 737.3,553.1 737.4,546.4 737.5,547.6 737.6,544.4 737.7,549.3 737.8,552.0 737.9,548.9 738.0,547.0 738.0,549.0 738.1,559.2 738.2,553.7 738.3,551.5 738.4,545.5 738.5,546.3 738.6,536.5 738.7,546.8 738.8,523.2 738.8,511.0 738.9,523.2 739.0,550.1 739.1,545.7 739.2,550.4 739.3,553.2 739.4,550.3 739.5,540.8 739.6,546.2 739.6,551.7 739.7,559.7 739.8,554.3 739.9,547.2 740.0,548.5 740.1,553.7 740.2,548.5 740.3,553.5 740.4,539.2 740.4,560.4 740.5,553.8 740.6,553.2 740.7,552.9 740.8,553.8 740.9,553.8 741.0,536.5 741.1,557.5 741.2,553.5 741.2,542.2 741.3,541.4 741.4,550.9 741.5,544.9 741.6,551.5 741.7,547.1 741.8,540.4 741.9,544.0 741.9,546.5 742.0,548.6 742.1,553.1 742.2,545.0 742.3,551.3 742.4,547.4 742.5,547.9 742.6,536.7 742.6,545.8 742.7,540.5 742.8,552.4 742.9,554.7 743.0,551.1 743.1,559.6 743.2,550.1 743.3,553.4 743.3,546.7 743.4,550.7 743.5,542.9 743.6,546.9 743.7,554.5 743.8,548.6 743.9,562.4 743.9,548.0 744.0,551.5 744.1,556.4 744.2,540.1 744.3,534.0 744.4,547.9 744.5,547.3 744.6,548.5 744.6,551.6 744.7,555.3 744.8,538.7 744.9,538.4 745.0,549.3 745.1,540.2 745.2,551.2 745.2,543.7 745.3,547.8 745.4,541.8 745.5,543.3 745.6,559.9 745.7,546.6 745.8,556.9 745.8,548.3 745.9,552.2 746.0,543.8 746.1,551.4 746.2,545.4 746.3,538.4 746.4,538.4 746.4,547.7 746.5,552.4 746.6,543.9 746.7,542.2 746.8,545.1 746.9,558.1 747.0,538.3 747.0,552.3 747.1,555.2 747.2,540.4 747.3,542.9 747.4,546.0 747.5,544.4 747.6,554.0 747.6,529.0 747.7,520.0 747.8,529.0 747.9,555.6 748.0,546.2 748.1,533.5 748.2,536.5 748.2,558.8 748.3,557.8 748.4,553.3 748.5,547.5 748.6,553.5 748.7,552.0 748.7,552.4 748.8,548.5 748.9,555.0 749.0,554.1 749.1,541.2 749.2,553.1 749.3,542.8 749.3,549.6 749.4,548.0 749.5,551.8 749.6,545.9 749.7,546.7 749.8,531.3 749.8,546.0 749.9,540.3 750.0,552.1 750.1,531.0 750.2,551.1 750.3,548.9 750.3,533.9 750.4,552.6 750.5,541.1 750.6,548.3 750.7,550.2 750.8,544.8 750.8,545.0 750.9,551.3 751.0,556.9 751.1,552.4 751.2,553.4 751.3,551.0 751.3,560.5 751.4,549.4 751.5,554.7 751.6,560.5 751.7,551.4 751.8,549.0 751.9,539.5 751.9,539.1 752.0,560.6 752.1,549.5 752.2,543.5 752.3,546.1 752.3,542.2 752.4,549.1 752.5,563.5 752.6,552.7 752.7,558.5 752.8,552.2 752.8,549.4 752.9,549.3 753.0,557.8 753.1,536.4 753.2,543.2 753.3,545.7 753.3,523.7 753.4,512.0 753.5,523.7 753.6,543.1 753.7,552.6 753.8,548.6 753.8,551.7 753.9,549.1 754.0,545.9 754.1,542.5 754.2,552.1 754.3,543.3 754.3,555.7 754.4,550.8 754.5,549.0 754.6,544.0 754.7,559.6 754.7,547.5 754.8,552.7 754.9,545.1 755.0,556.6 755.1,552.0 755.2,555.9 755.2,554.5 755.3,548.5 755.4,543.7 755.5,549.7 755.6,545.2 755.6,531.1 755.7,560.2 755.8,555.4 755.9,551.6 756.0,553.8 756.1,555.4 756.1,512.1 756.2,494.0 756.3,512.1 756.4,553.0 756.5,561.3 756.5,542.7 756.6,550.4 756.7,546.7 756.8,561.4 756.9,546.9 756.9,558.3 757.0,554.3 757.1,553.5 757.2,557.2 757.3,553.1 757.4,548.6 757.4,561.7 757.5,543.2 757.6,530.9 757.7,545.7 757.8,555.2 757.8,546.5 757.9,551.4 758.0,556.8 758.1,532.8 758.2,553.6 758.2,558.1 758.3,551.3 758.4,558.0 758.5,533.8 758.6,560.9 758.6,558.3 758.7,551.9 758.8,558.8 758.9,521.6 759.0,508.0 759.0,521.6 759.1,538.3 759.2,548.5 759.3,557.6 759.4,560.0 759.4,542.1 759.5,546.1 759.6,539.0 759.7,543.4 759.8,555.8 759.8,548.0 759.9,555.2 760.0,561.2 760.1,540.9 760.2,552.9 760.2,554.2 760.3,555.1 760.4,558.9 760.5,559.8 760.6,556.1 760.6,546.4 760.7,559.9 760.8,563.1 760.9,545.6 761.0,552.0 761.0,555.0 761.1,550.4 761.2,554.4 761.3,554.8 761.4,560.1 761.4,550.8 761.5,552.0 761.6,563.4 761.7,560.0 761.8,550.1 761.8,545.3 761.9,552.8 762.0,556.6 762.1,551.6 762.2,544.2 762.2,545.1 762.3,533.7 762.4,553.1 762.5,554.8 762.5,560.2 762.6,548.3 762.7,547.5 762.8,541.7 762.9,534.5 762.9,551.3 763.0,550.9 763.1,551.6 763.2,554.1 763.3,550.4 763.3,543.6 763.4,554.1 763.5,555.2 763.6,547.8 763.6,564.3 763.7,540.6 763.8,543.1 763.9,549.2 764.0,549.2 764.0,564.5 764.1,554.6 764.2,560.4 764.3,556.6 764.3,506.1 764.4,483.0 764.5,506.1 764.6,552.0 764.7,566.1 764.7,551.1 764.8,533.6 764.9,551.9 765.0,549.1 765.1,545.6 765.1,546.3 765.2,551.3 765.3,556.0 765.4,556.7 765.4,558.2 765.5,541.3 765.6,547.4 765.7,545.7 765.8,553.3 765.8,553.5 765.9,550.7 766.0,559.9 766.1,550.4 766.1,554.3 766.2,557.0 766.3,538.7 766.4,551.5 766.4,535.3 766.5,558.3 766.6,560.0 766.7,555.2 766.8,555.0 766.8,548.7 766.9,541.8 767.0,502.5 767.1,477.0 767.1,502.6 767.2,568.5 767.3,550.5 767.4,547.8 767.4,554.0 767.5,552.8 767.6,563.0 767.7,560.0 767.8,564.3 767.8,554.8 767.9,542.5 768.0,560.7 768.1,566.1 768.1,568.5 768.2,563.6 768.3,553.3 768.4,555.2 768.4,553.6 768.5,550.5 768.6,538.4 768.7,543.1 768.8,555.6 768.8,555.5 768.9,559.3 769.0,539.4 769.1,557.4 769.1,566.6 769.2,561.3 769.3,553.9 769.4,556.5 769.4,554.9 769.5,563.3 769.6,528.1 769.7,515.7 769.7,528.1 769.8,542.9 769.9,558.1 770.0,551.3 770.0,549.1 770.1,555.0 770.2,536.1 770.3,567.0 770.3,555.6 770.4,549.5 770.5,554.5 770.6,558.3 770.7,549.2 770.7,553.8 770.8,544.7 770.9,547.3 771.0,552.6 771.0,543.0 771.1,549.5 771.2,549.9 771.3,554.9 771.3,548.9 771.4,551.9 771.5,549.6 771.6,566.9 771.6,552.5 771.7,564.7 771.8,556.5 771.9,567.3 771.9,549.2 772.0,556.9 772.1,543.7 772.2,564.3 772.2,559.8 772.3,553.4 772.4,567.8 772.5,567.8 772.5,565.9 772.6,566.4 772.7,556.3 772.8,550.6 772.8,546.0 772.9,562.9 773.0,543.9 773.1,554.7 773.1,567.3 773.2,558.4 773.3,547.8 773.4,550.4 773.4,569.0 773.5,549.1 773.6,553.1 773.7,546.9 773.7,555.8 773.8,552.1 773.9,563.0 774.0,549.7 774.0,553.4 774.1,544.1 774.2,565.0 774.2,564.3 774.3,569.7 774.4,557.3 774.5,559.3 774.5,563.5 774.6,545.4 774.7,550.4 774.8,568.5 774.8,564.2 774.9,560.4 775.0,556.7 775.1,562.1 775.1,562.5 775.2,562.4 775.3,549.5 775.4,556.8 775.4,559.3 775.5,558.7 775.6,549.7 775.7,555.2 775.7,550.2 775.8,553.9 775.9,558.3 775.9,560.6 776.0,560.8 776.1,563.6 776.2,557.9 776.2,548.5 776.3,557.3 776.4,553.9 776.5,545.6 776.5,552.7 776.6,559.7 776.7,563.9 776.8,556.2 776.8,547.6 776.9,556.7 777.0,539.0 777.0,565.5 777.1,548.6 777.2,562.8 777.3,555.6 777.3,559.8 777.4,542.0 777.5,560.7 777.6,557.1 777.6,572.3 777.7,549.9 777.8,553.4 777.9,544.9 777.9,560.7 778.0,555.3 778.1,567.3 778.1,547.1 778.2,568.0 778.3,560.4 778.4,554.3 778.4,560.7 778.5,548.9 778.6,548.2 778.7,571.0 778.7,545.1 778.8,557.6 778.9,566.7 778.9,558.3 779.0,566.6 779.1,556.1 779.2,553.0 779.2,565.5 779.3,563.7 779.4,557.1 779.4,567.1 779.5,550.0 779.6,564.8 779.7,555.1 779.7,559.3 779.8,558.5 779.9,559.1 780.0,561.5 780.0,567.5 780.1,567.5 780.2,558.6 780.2,558.5 780.3,551.3 780.4,569.3 780.5,538.7 780.5,553.8 780.6,559.4 780.7,568.4 780.7,553.4 780.8,560.1 780.9,537.9 781.0,556.3 781.0,558.8 781.1,545.6 781.2,565.0 781.2,555.2 781.3,559.2 781.4,548.7 781.5,570.4 781.5,562.3 781.6,545.8 781.7,554.2 781.7,556.1 781.8,551.7 781.9,549.1 782.0,549.4 782.0,552.5 782.1,544.2 782.2,491.7 782.2,458.0 782.3,491.7 782.4,545.9 782.5,557.4 782.5,565.9 782.6,550.3 782.7,559.7 782.7,560.7 782.8,551.5 782.9,557.1 783.0,551.5 783.0,568.4 783.1,563.0 783.2,558.9 783.2,563.3 783.3,539.5 783.4,552.7 783.5,549.6 783.5,548.8 783.6,549.9 783.7,564.3 783.7,566.2 783.8,569.2 783.9,549.6 783.9,558.7 784.0,567.2 784.1,571.0 784.2,556.5 784.2,556.3 784.3,556.2 784.4,561.9 784.4,564.4 784.5,565.7 784.6,555.8 784.7,569.0 784.7,552.1 784.8,563.4 784.9,568.4 784.9,566.8 785.0,544.1 785.1,556.5 785.1,558.6 785.2,554.2 785.3,554.5 785.4,552.4 785.4,566.9 785.5,551.1 785.6,544.3 785.6,568.6 785.7,562.0 785.8,571.3 785.8,570.2 785.9,562.4 786.0,567.1 786.1,551.8 786.1,561.2 786.2,571.7 786.3,562.9 786.3,561.7 786.4,571.8 786.5,565.4 786.5,549.9 786.6,567.8 786.7,539.7 786.8,563.4 786.8,562.6 786.9,556.8 787.0,543.5 787.0,557.0 787.1,572.0 787.2,552.4 787.2,554.4 787.3,558.7 787.4,557.2 787.4,571.9 787.5,562.3 787.6,558.9 787.7,565.2 787.7,562.2 787.8,558.8 787.9,557.9 787.9,559.0 788.0,572.9 788.1,557.1 788.1,559.6 788.2,568.8 788.3,551.3 788.3,562.7 788.4,565.1 788.5,559.3 788.6,559.7 788.6,567.8 788.7,544.5 788.8,564.1 788.8,563.7 788.9,561.3 789.0,561.4 789.0,565.7 789.1,570.0 789.2,552.5 789.2,567.1 789.3,555.2 789.4,553.8 789.4,561.2 789.5,561.2 789.6,574.6 789.7,571.1 789.7,538.9 789.8,564.6 789.9,562.6 789.9,564.0 790.0,560.4 790.1,562.0 790.1,560.4 790.2,557.4 790.3,567.5 790.3,560.9 790.4,562.2 790.5,555.9 790.5,555.4 790.6,561.0 790.7,550.0 790.7,569.6 790.8,557.1 790.9,544.2 791.0,556.3 791.0,560.6 791.1,563.3 791.2,564.6 791.2,555.1 791.3,545.8 791.4,558.7 791.4,558.8 791.5,554.6 791.6,568.1 791.6,552.5 791.7,553.6 791.8,573.6 791.8,556.8 791.9,558.2 792.0,553.7 792.0,551.0 792.1,554.4 792.2,547.8 792.2,564.4 792.3,561.4 792.4,539.2 792.4,558.8 792.5,555.7 792.6,566.2 792.6,555.8 792.7,566.2 792.8,556.0 792.9,547.0 792.9,557.0 793.0,557.2 793.1,540.1 793.1,556.2 793.2,561.0 793.3,560.9 793.3,553.3 793.4,551.6 793.5,554.1 793.5,548.1 793.6,559.7 793.7,563.5 793.7,557.0 793.8,554.7 793.9,540.4 793.9,563.4 794.0,566.3 794.1,546.3 794.1,571.4 794.2,569.5 794.3,555.4 794.3,559.0 794.4,560.1 794.5,544.8 794.5,556.5 794.6,561.8 794.7,563.3 794.7,571.3 794.8,572.7 794.9,554.6 794.9,565.8 795.0,558.8 795.1,560.0 795.1,559.6 795.2,556.5 795.3,555.9 795.3,555.7 795.4,553.8 795.5,556.0 795.5,571.2 795.6,558.5 795.7,553.6 795.7,552.2 795.8,566.9 795.9,554.8 795.9,559.9 796.0,547.2 796.1,546.1 796.1,560.5 796.2,535.4 796.3,525.0 796.3,535.4 796.4,553.1 796.5,555.3 796.5,555.7 796.6,553.9 796.7,556.0 796.7,555.7 796.8,557.1 796.9,559.0 796.9,562.0 797.0,561.7 797.1,559.0 797.1,553.4 797.2,561.9 797.3,563.9 797.3,559.6 797.4,539.0 797.5,571.1 797.5,546.0 797.6,562.7 797.7,560.1 797.7,568.6 797.8,570.8 797.8,562.9 797.9,555.6 798.0,562.4 798.0,551.0 798.1,559.2 798.2,553.6 798.2,561.9 798.3,547.0 798.4,556.4 798.4,559.9 798.5,557.1 798.6,556.3 798.6,542.6 798.7,557.0 798.8,568.2 798.8,554.7 798.9,550.0 799.0,551.7 799.0,555.7 799.1,563.1 799.2,556.8 799.2,563.7 799.3,567.7 799.4,552.7 799.4,560.0 799.5,556.5 799.5,564.6 799.6,563.9 799.7,561.0 799.7,551.1 799.8,556.2 799.9,557.8 799.9,557.9 800.0,554.3 800.1,560.1 800.1,561.3 800.2,560.5 800.3,553.2 800.3,555.8 800.4,550.7 800.5,553.5 800.5,562.4 800.6,556.9 800.7,557.2 800.7,565.4 800.8,554.5 800.8,558.3 800.9,548.6 801.0,564.3 801.0,557.1 801.1,563.5 801.2,563.3 801.2,558.0 801.3,561.9 801.4,548.7 801.4,554.7 801.5,545.7 801.6,564.7 801.6,562.2 801.7,567.6 801.8,567.1 801.8,568.6 801.9,557.0 801.9,548.4 802.0,555.6 802.1,570.7 802.1,561.9 802.2,566.0 802.3,563.3 802.3,562.1 802.4,556.1 802.5,543.7 802.5,564.1 802.6,552.2 802.7,569.2 802.7,561.9 802.8,562.7 802.8,558.4 802.9,547.0 803.0,552.4 803.0,564.6 803.1,550.0 803.2,572.1 803.2,568.3 803.3,545.7 803.4,557.8 803.4,543.1 803.5,538.7 803.5,565.6 803.6,561.4 803.7,546.8 803.7,556.7 803.8,547.1 803.9,560.3 803.9,549.3 804.0,565.2 804.1,562.8 804.1,555.0 804.2,561.4 804.3,560.1 804.3,559.4 804.4,558.7 804.4,563.6 804.5,559.2 804.6,556.2 804.6,539.8 804.7,554.1 804.8,567.0 804.8,564.3 804.9,546.0 804.9,556.9 805.0,558.0 805.1,515.2 805.1,494.0 805.2,515.3 805.3,568.9 805.3,546.1 805.4,564.9 805.5,546.3 805.5,566.0 805.6,562.0 805.6,553.6 805.7,555.7 805.8,555.8 805.8,567.3 805.9,555.2 806.0,556.3 806.0,561.8 806.1,570.2 806.1,555.2 806.2,561.0 806.3,554.2 806.3,566.1 806.4,551.3 806.5,561.8 806.5,561.9 806.6,544.8 806.7,567.0 806.7,571.8 806.8,559.3 806.8,561.5 806.9,560.6 807.0,567.3 807.0,564.9 807.1,559.9 807.2,538.9 807.2,554.3 807.3,557.6 807.3,559.5 807.4,570.8 807.5,565.4 807.5,546.6 807.6,555.9 807.7,567.8 807.7,546.0 807.8,547.5 807.8,558.8 807.9,570.3 808.0,554.7 808.0,556.8 808.1,560.2 808.2,552.6 808.2,573.6 808.3,560.9 808.3,561.0 808.4,555.1 808.5,538.9 808.5,557.3 808.6,554.3 808.7,558.6 808.7,550.7 808.8,555.8 808.8,572.4 808.9,554.4 809.0,553.6 809.0,559.9 809.1,562.0 809.2,562.7 809.2,561.5 809.3,548.4 809.3,556.6 809.4,542.1 809.5,564.7 809.5,562.7 809.6,565.6 809.6,549.3 809.7,547.1 809.8,560.4 809.8,553.1 809.9,543.3 810.0,554.2 810.0,549.4 810.1,547.3 810.1,562.4 810.2,562.0 810.3,565.2 810.3,562.1 810.4,560.6 810.4,563.0 810.5,557.9 810.6,560.8 810.6,558.9 810.7,547.3 810.8,562.6 810.8,571.9 810.9,570.7 810.9,543.1 811.0,562.6 811.1,561.6 811.1,572.2 811.2,571.7 811.2,555.0 811.3,554.9 811.4,557.1 811.4,556.2 811.5,542.6 811.6,547.5 811.6,552.6 811.7,550.6 811.7,555.7 811.8,564.7 811.9,552.9 811.9,566.0 812.0,571.9 812.0,561.7 812.1,539.9 812.2,558.9 812.2,563.0 812.3,558.7 812.4,568.3 812.4,562.9 812.5,565.2 812.5,566.9 812.6,567.9 812.7,554.0 812.7,562.6 812.8,555.7 812.8,558.0 812.9,560.7 813.0,564.9 813.0,560.6 813.1,559.2 813.1,576.0 813.2,576.6 813.3,547.9 813.3,563.6 813.4,557.8 813.4,565.5 813.5,566.3 813.6,572.6 813.6,558.5 813.7,540.6 813.7,559.8 813.8,556.3 813.9,550.2 813.9,563.0 814.0,576.3 814.1,559.6 814.1,568.5 814.2,561.7 814.2,566.9 814.3,560.1 814.4,565.0 814.4,554.2 814.5,566.4 814.5,574.1 814.6,568.9 814.7,557.6 814.7,548.2 814.8,562.7 814.8,553.5 814.9,560.5 815.0,568.4 815.0,548.3 815.1,559.6 815.1,545.7 815.2,566.6 815.3,564.3 815.3,573.4 815.4,540.3 815.4,566.5 815.5,548.4 815.6,561.5 815.6,528.5 815.7,513.0 815.7,528.5 815.8,553.1 815.9,548.5 815.9,574.5 816.0,560.5 816.0,559.0 816.1,571.8 816.2,567.4 816.2,563.2 816.3,564.0 816.3,567.0 816.4,555.5 816.5,562.7 816.5,574.7 816.6,541.3 816.6,576.4 816.7,574.8 816.8,563.8 816.8,573.7 816.9,564.6 816.9,560.8 817.0,565.1 817.1,564.4 817.1,552.6 817.2,574.9 817.2,566.1 817.3,575.0 817.4,557.2 817.4,559.8 817.5,553.6 817.5,561.3 817.6,567.0 817.6,575.1 817.7,559.3 817.8,560.2 817.8,569.5 817.9,566.2 817.9,557.9 818.0,559.3 818.1,546.6 818.1,571.2 818.2,558.5 818.2,560.2 818.3,570.9 818.4,558.5 818.4,570.0 818.5,578.1 818.5,558.1 818.6,572.5 818.7,567.0 818.7,556.2 818.8,554.3 818.8,551.0 818.9,565.1 819.0,560.9 819.0,564.8 819.1,562.1 819.1,575.4 819.2,571.6 819.2,551.8 819.3,564.5 819.4,553.9 819.4,575.7 819.5,560.7 819.5,564.4 819.6,560.3 819.7,549.3 819.7,567.1 819.8,549.6 819.8,556.1 819.9,578.5 820.0,563.9 820.0,554.1 820.1,561.6 820.1,563.3 820.2,575.7 820.2,558.1 820.3,564.7 820.4,567.6 820.4,561.6 820.5,564.3 820.5,569.9 820.6,558.2 820.7,549.5 820.7,543.7 820.8,565.1 820.8,566.6 820.9,566.6 820.9,571.4 821.0,563.5 821.1,558.8 821.1,555.0 821.2,553.7 821.2,569.9 821.3,558.7 821.4,557.2 821.4,573.7 821.5,553.6 821.5,569.2 821.6,555.8 821.6,559.3 821.7,559.3 821.8,565.7 821.8,560.4 821.9,569.7 821.9,558.6 822.0,576.0 822.1,560.3 822.1,550.0 822.2,556.1 822.2,576.8 822.3,565.1 822.3,553.1 822.4,571.4 822.5,556.5 822.5,559.4 822.6,570.8 822.6,549.9 822.7,576.2 822.7,556.8 822.8,550.0 822.9,574.0 822.9,561.6 823.0,541.9 823.0,567.7 823.1,574.9 823.2,574.9 823.2,567.6 823.3,556.0 823.3,559.3 823.4,569.3 823.4,566.5 823.5,546.4 823.6,573.9 823.6,554.0 823.7,575.2 823.7,555.3 823.8,559.7 823.8,562.7 823.9,569.2 824.0,572.2 824.0,552.0 824.1,556.6 824.1,558.3 824.2,562.4 824.2,557.5 824.3,555.4 824.4,574.6 824.4,568.7 824.5,563.7 824.5,577.6 824.6,561.9 824.6,552.2 824.7,550.4 824.8,568.1 824.8,563.1 824.9,545.3 824.9,556.2 825.0,564.7 825.0,565.4 825.1,573.8 825.2,573.2 825.2,559.1 825.3,576.7 825.3,570.6 825.4,575.1 825.4,562.6 825.5,571.4 825.6,524.7 825.6,506.0 825.7,524.7 825.7,567.1 825.8,547.1 825.8,564.0 825.9,564.5 826.0,554.4 826.0,565.1 826.1,571.2 826.1,564.8 826.2,572.6 826.2,576.9 826.3,565.1 826.4,574.3 826.4,565.6 826.5,555.8 826.5,570.1 826.6,555.3 826.6,564.5 826.7,576.9 826.8,548.6 826.8,555.9 826.9,561.5 826.9,567.5 827.0,570.6 827.0,559.9 827.1,547.0 827.2,579.8 827.2,563.7 827.3,571.9 827.3,578.4 827.4,574.8 827.4,566.4 827.5,564.0 827.5,552.4 827.6,562.0 827.7,563.6 827.7,572.8 827.8,545.2 827.8,556.9 827.9,554.2 827.9,571.0 828.0,555.8 828.1,577.2 828.1,566.4 828.2,560.6 828.2,558.3 828.3,574.8 828.3,580.3 828.4,565.7 828.4,543.8 828.5,565.6 828.6,556.9 828.6,551.2 828.7,562.7 828.7,563.5 828.8,555.3 828.8,577.4 828.9,555.8 829.0,557.9 829.0,566.5 829.1,544.4 829.1,566.6 829.2,562.5 829.2,575.9 829.3,550.6 829.3,551.3 829.4,556.8 829.5,563.4 829.5,565.1 829.6,577.5 829.6,563.9 829.7,561.2 829.7,560.5 829.8,558.5 829.8,570.0 829.9,544.2 830.0,580.6 830.0,557.6 830.1,559.7 830.1,565.0 830.2,552.5 830.2,565.7 830.3,564.6 830.4,574.7 830.4,548.4 830.5,551.5 830.5,567.5 830.6,557.3 830.6,546.4 830.7,558.5 830.7,577.8 830.8,561.5 830.9,543.6 830.9,571.5 831.0,577.8 831.0,561.9 831.1,565.9 831.1,566.8 831.2,565.5 831.2,563.3 831.3,556.4 831.3,561.0 831.4,543.6 831.5,557.4 831.5,560.8 831.6,564.4 831.6,559.9 831.7,578.7 831.7,571.6 831.8,570.4 831.8,557.7 831.9,551.8 832.0,578.0 832.0,551.0 832.1,578.0 832.1,544.3 832.2,578.0 832.2,568.2 832.3,564.5 832.3,560.8 832.4,563.8 832.5,558.3 832.5,567.3 832.6,564.7 832.6,569.0 832.7,569.1 832.7,557.0 832.8,567.4 832.8,565.4 832.9,573.0 832.9,577.3 833.0,562.2 833.1,552.1 833.1,564.8 833.2,564.7 833.2,557.8 833.3,568.2 833.3,563.4 833.4,570.0 833.4,555.9 833.5,567.2 833.6,563.7 833.6,563.6 833.7,572.4 833.7,560.7 833.8,562.2 833.8,570.8 833.9,554.0 833.9,570.3 834.0,559.9 834.0,552.3 834.1,575.6 834.2,577.3 834.2,565.8 834.3,557.6 834.3,552.2 834.4,567.4 834.4,576.3 834.5,553.9 834.5,546.9 834.6,576.6 834.6,570.9 834.7,563.6 834.8,578.4 834.8,555.4 834.9,568.8 834.9,572.7 835.0,554.9 835.0,561.3 835.1,561.8 835.1,578.4 835.2,564.5 835.2,564.1 835.3,560.8 835.3,578.4 835.4,578.4 835.5,558.5 835.5,579.9 835.6,569.5 835.6,566.6 835.7,567.8 835.7,559.6 835.8,552.1 835.8,566.2 835.9,558.0 835.9,578.4 836.0,566.6 836.1,567.2 836.1,568.4 836.2,560.6 836.2,566.8 836.3,557.0 836.3,565.3 836.4,568.8 836.4,565.5 836.5,552.1 836.5,569.5 836.6,559.4 836.6,572.5 836.7,565.9 836.8,565.1 836.8,568.8 836.9,560.4 836.9,565.6 837.0,562.6 837.0,569.4 837.1,572.0 837.1,559.1 837.2,562.0 837.2,559.3 837.3,578.4 837.3,559.5 837.4,543.9 837.5,563.5 837.5,558.4 837.6,569.4 837.6,563.2 837.7,573.1 837.7,558.4 837.8,567.8 837.8,578.4 837.9,572.0 837.9,565.2 838.0,572.1 838.0,556.3 838.1,569.0 838.1,568.1 838.2,569.2 838.3,569.3 838.3,570.7 838.4,560.8 838.4,561.4 838.5,557.6 838.5,569.0 838.6,551.9 838.6,564.4 838.7,559.1 838.7,566.7 838.8,578.4 838.8,561.2 838.9,573.3 838.9,575.6 839.0,556.8 839.1,543.9 839.1,567.0 839.2,558.9 839.2,561.9 839.3,563.5 839.3,566.4 839.4,561.2 839.4,573.6 839.5,569.3 839.5,564.6 839.6,567.4 839.6,549.5 839.7,554.1 839.7,555.2 839.8,566.6 839.9,576.2 839.9,561.5 840.0,556.6 840.0,558.2 840.1,566.6 840.1,555.5 840.2,558.5 840.2,570.0 840.3,574.2 840.3,565.9 840.4,564.9 840.4,562.7 840.5,569.3 840.5,551.8 840.6,566.5 840.6,566.5 840.7,562.5 840.7,562.4 840.8,568.0 840.9,561.5 840.9,569.7 841.0,559.2 841.0,568.0 841.1,571.7 841.1,557.4 841.2,546.8 841.2,567.9 841.3,567.0 841.3,574.7 841.4,568.3 841.4,558.5 841.5,569.7 841.5,573.5 841.6,562.5 841.6,563.2 841.7,563.1 841.7,543.6 841.8,559.1 841.9,570.6 841.9,573.1 842.0,545.2 842.0,564.0 842.1,562.8 842.1,570.4 842.2,572.9 842.2,568.1 842.3,573.7 842.3,571.9 842.4,570.0 842.4,568.9 842.5,573.1 842.5,561.2 842.6,556.9 842.6,571.5 842.7,572.1 842.7,577.2 842.8,564.6 842.8,556.7 842.9,568.0 843.0,575.8 843.0,560.8 843.1,564.1 843.1,561.1 843.2,554.0 843.2,574.0 843.3,562.0 843.3,577.0 843.4,562.1 843.4,552.3 843.5,546.5 843.5,557.9 843.6,546.4 843.6,563.3 843.7,562.3 843.7,577.1 843.8,551.5 843.8,557.5 843.9,565.7 843.9,570.5 844.0,565.8 844.0,564.7 844.1,568.9 844.1,524.5 844.2,505.0 844.3,524.5 844.3,545.4 844.4,565.0 844.4,559.1 844.5,566.8 844.5,563.4 844.6,574.1 844.6,568.9 844.7,567.1 844.7,559.0 844.8,568.9 844.8,551.4 844.9,571.4 844.9,571.1 845.0,566.3 845.0,569.8 845.1,554.5 845.1,561.2 845.2,558.3 845.2,569.2 845.3,569.1 845.3,576.5 845.4,542.9 845.4,558.3 845.5,568.0 845.5,560.3 845.6,559.9 845.6,569.4 845.7,564.9 845.7,560.6 845.8,572.9 845.9,564.0 845.9,554.5 846.0,563.3 846.0,564.8 846.1,559.7 846.1,572.4 846.2,566.9 846.2,570.0 846.3,571.4 846.3,549.6 846.4,563.3 846.4,565.7 846.5,562.2 846.5,575.6 846.6,558.7 846.6,555.3 846.7,569.2 846.7,545.9 846.8,554.7 846.8,570.5 846.9,570.8 846.9,542.8 847.0,556.6 847.0,571.2 847.1,570.5 847.1,571.0 847.2,563.0 847.2,571.6 847.3,577.6 847.3,570.8 847.4,570.4 847.4,573.9 847.5,569.1 847.5,565.6 847.6,568.2 847.6,572.7 847.7,567.9 847.7,570.6 847.8,562.7 847.8,564.9 847.9,545.5 847.9,572.1 848.0,568.2 848.0,558.0 848.1,568.9 848.1,559.7 848.2,569.3 848.3,578.4 848.3,566.5 848.4,560.1 848.4,562.1 848.5,567.2 848.5,562.3 848.6,570.2 848.6,551.5 848.7,543.0 848.7,564.2 848.8,565.0 848.8,574.7 848.9,572.3 848.9,552.0 849.0,554.9 849.0,571.6 849.1,562.2 849.1,558.3 849.2,570.8 849.2,564.0 849.3,567.9 849.3,558.8 849.4,561.5 849.4,563.5 849.5,566.9 849.5,572.3 849.6,552.9 849.6,545.9 849.7,559.2 849.7,565.6 849.8,559.3 849.8,565.2 849.9,572.9 849.9,565.7 850.0,573.7 850.0,564.6 850.1,551.5 850.1,564.4 850.2,566.9 850.2,579.6 850.3,563.7 850.3,574.1 850.4,548.1 850.4,556.8 850.5,555.4 850.5,569.6 850.6,569.1 850.6,556.0 850.7,563.3 850.7,565.4 850.8,572.1 850.8,570.9 850.9,578.6 850.9,559.9 851.0,544.0 851.0,546.9 851.1,579.0 851.1,556.7 851.2,557.1 851.2,566.7 851.3,565.2 851.3,545.9 851.4,561.5 851.4,578.7 851.5,571.6 851.5,571.7 851.6,555.4 851.6,568.6 851.7,578.7 851.7,563.2 851.8,578.4 851.8,571.1 851.9,574.3 851.9,568.4 852.0,572.8 852.0,552.2 852.1,564.1 852.1,551.0 852.2,565.9 852.2,562.1 852.3,556.0 852.3,568.2 852.4,567.5 852.4,565.1 852.5,572.2 852.5,562.5 852.6,572.1 852.6,571.0 852.7,558.7 852.7,571.4 852.8,563.2 852.8,567.9 852.9,562.3 852.9,575.1 853.0,550.4 853.0,551.6 853.1,543.3 853.1,555.9 853.2,563.2 853.2,570.4 853.3,565.9 853.3,552.4 853.4,551.7 853.4,581.6 853.5,563.2 853.5,571.5 853.6,569.5 853.6,544.4 853.7,575.8 853.7,568.0 853.8,570.7 853.8,562.0 853.9,568.4 853.9,578.1 854.0,557.1 854.0,556.1 854.1,562.0 854.1,573.8 854.1,565.9 854.2,560.0 854.2,569.9 854.3,565.1 854.3,565.4 854.4,555.6 854.4,551.9 854.5,568.8 854.5,561.4 854.6,570.8 854.6,579.2 854.7,571.8 854.7,556.6 854.8,567.6 854.8,561.3 854.9,549.0 854.9,572.3 855.0,563.3 855.0,569.9 855.1,566.8 855.1,569.4 855.2,572.0 855.2,565.3 855.3,574.2 855.3,575.4 855.4,559.3 855.4,564.6 855.5,565.6 855.5,552.1 855.6,559.1 855.6,575.3 855.7,570.2 855.7,566.4 855.8,567.4 855.8,573.0 855.9,557.1 855.9,577.0 856.0,561.7 856.0,563.1 856.1,558.2 856.1,568.2 856.2,559.5 856.2,565.3 856.3,559.2 856.3,574.4 856.4,550.4 856.4,560.2 856.4,555.8 856.5,556.3 856.5,571.6 856.6,556.1 856.6,559.2 856.7,565.2 856.7,576.8 856.8,566.3 856.8,563.8 856.9,570.9 856.9,553.3 857.0,557.8 857.0,573.1 857.1,574.1 857.1,570.0 857.2,568.9 857.2,563.8 857.3,564.2 857.3,579.1 857.4,558.7 857.4,575.4 857.5,565.7 857.5,554.5 857.6,570.2 857.6,560.1 857.7,569.1 857.7,568.8 857.8,551.5 857.8,561.7 857.9,552.6 857.9,569.2 858.0,570.9 858.0,564.3 858.0,560.7 858.1,569.9 858.1,571.4 858.2,563.1 858.2,572.4 858.3,566.7 858.3,565.7 858.4,557.4 858.4,561.4 858.5,571.2 858.5,575.6 858.6,574.8 858.6,565.7 858.7,565.2 858.7,560.0 858.8,560.5 858.8,563.7 858.9,573.5 858.9,575.2 859.0,569.0 859.0,570.6 859.1,559.4 859.1,565.0 859.2,571.6 859.2,566.8 859.3,570.7 859.3,556.8 859.3,577.6 859.4,564.1 859.4,561.8 859.5,567.2 859.5,552.9 859.6,564.0 859.6,580.0 859.7,562.2 859.7,573.5 859.8,554.0 859.8,556.1 859.9,554.7 859.9,576.7 860.0,553.0 860.0,568.6 860.1,560.4 860.1,571.4 860.2,558.5 860.2,561.5 860.3,569.3 860.3,553.6 860.4,553.0 860.4,581.8 860.4,567.2 860.5,570.3 860.5,566.7 860.6,569.3 860.6,566.7 860.7,569.7 860.7,557.4 860.8,553.1 860.8,561.7 860.9,578.2 860.9,561.9 861.0,553.2 861.0,578.1 861.1,525.1 861.1,505.0 861.2,525.1 861.2,570.8 861.3,557.5 861.3,545.9 861.3,571.6 861.4,570.2 861.4,547.9 861.5,553.3 861.5,566.1 861.6,578.5 861.6,576.4 861.7,556.0 861.7,581.7 861.8,582.1 861.8,569.8 861.9,561.3 861.9,577.2 862.0,580.4 862.0,575.1 862.1,575.3 862.1,568.8 862.2,566.0 862.2,578.6 862.2,573.9 862.3,569.7 862.3,562.8 862.4,559.3 862.4,574.0 862.5,574.0 862.5,567.7 862.6,583.4 862.6,557.0 862.7,562.4 862.7,560.4 862.8,571.7 862.8,566.2 862.9,567.6 862.9,562.2 863.0,568.3 863.0,555.4 863.0,580.6 863.1,568.0 863.1,571.4 863.2,571.0 863.2,561.5 863.3,577.9 863.3,569.1 863.4,566.7 863.4,575.4 863.5,561.1 863.5,572.7 863.6,580.7 863.6,564.3 863.7,571.2 863.7,558.1 863.8,569.8 863.8,570.0 863.8,555.9 863.9,580.0 863.9,580.7 864.0,554.0 864.0,571.1 864.1,564.9 864.1,550.9 864.2,571.0 864.2,568.4 864.3,566.5 864.3,570.1 864.4,565.1 864.4,569.6 864.5,563.0 864.5,574.6 864.5,580.8 864.6,568.2 864.6,565.8 864.7,578.1 864.7,547.3 864.8,566.7 864.8,559.6 864.9,563.9 864.9,560.1 865.0,565.9 865.0,577.0 865.1,561.7 865.1,566.3 865.2,576.4 865.2,571.8 865.2,573.4 865.3,567.0 865.3,564.1 865.4,564.6 865.4,565.1 865.5,558.2 865.5,554.0 865.6,545.9 865.6,569.5 865.7,563.7 865.7,575.9 865.8,576.4 865.8,568.4 865.9,565.3 865.9,571.1 865.9,564.0 866.0,566.2 866.0,561.5 866.1,562.9 866.1,572.1 866.2,564.7 866.2,571.5 866.3,567.8 866.3,568.4 866.4,570.3 866.4,549.2 866.5,564.7 866.5,570.0 866.5,578.6 866.6,571.8 866.6,581.1 866.7,577.6 866.7,569.0 866.8,558.4 866.8,565.7 866.9,566.3 866.9,568.6 867.0,570.8 867.0,558.1 867.1,581.3 867.1,583.2 867.1,563.0 867.2,558.3 867.2,569.5 867.3,564.0 867.3,553.9 867.4,568.4 867.4,566.4 867.5,555.4 867.5,572.5 867.6,565.7 867.6,570.7 867.7,558.5 867.7,563.7 867.7,570.5 867.8,572.8 867.8,549.7 867.9,553.9 867.9,569.4 868.0,566.1 868.0,578.1 868.1,560.1 868.1,571.2 868.2,556.6 868.2,569.9 868.2,565.0 868.3,569.4 868.3,567.2 868.4,566.4 868.4,551.2 868.5,576.5 868.5,567.8 868.6,560.7 868.6,545.2 868.7,575.7 868.7,568.0 868.8,562.2 868.8,562.6 868.8,578.0 868.9,568.7 868.9,550.0 869.0,579.2 869.0,570.6 869.1,557.2 869.1,558.3 869.2,570.1 869.2,562.1 869.3,564.4 869.3,581.5 869.3,581.5 869.4,581.5 869.4,553.5 869.5,569.9 869.5,559.2 869.6,558.9 869.6,568.7 869.7,569.1 869.7,575.2 869.8,574.2 869.8,571.6 869.8,572.7 869.9,569.9 869.9,578.0 870.0,547.5 870.0,581.6 870.1,572.5 870.1,557.8 870.2,570.2 870.2,581.2 870.3,563.4 870.3,572.1 870.3,567.5 870.4,579.3 870.4,569.8 870.5,552.8 870.5,571.5 870.6,571.7 870.6,568.9 870.7,563.8 870.7,557.3 870.7,567.8 870.8,555.6 870.8,561.4 870.9,568.6 870.9,576.3 871.0,574.9 871.0,554.6 871.1,575.5 871.1,553.8 871.2,569.7 871.2,568.8 871.2,574.9 871.3,569.4 871.3,576.2 871.4,563.4 871.4,567.2 871.5,574.8 871.5,564.0 871.6,563.9 871.6,568.6 871.7,556.2 871.7,566.3 871.7,560.2 871.8,579.4 871.8,546.9 871.9,573.5 871.9,581.8 872.0,569.7 872.0,565.3 872.1,570.8 872.1,570.5 872.1,566.0 872.2,570.9 872.2,558.8 872.3,560.6 872.3,570.3 872.4,558.6 872.4,576.7 872.5,571.5 872.5,563.5 872.5,584.3 872.6,570.0 872.6,581.0 872.7,566.6 872.7,564.0 872.8,571.6 872.8,560.2 872.9,576.2 872.9,571.1 873.0,553.7 873.0,567.9 873.0,569.6 873.1,558.6 873.1,565.7 873.2,565.5 873.2,553.7 873.3,570.1 873.3,567.6 873.4,562.7 873.4,564.8 873.4,568.3 873.5,576.5 873.5,571.5 873.6,566.0 873.6,565.2 873.7,564.1 873.7,575.5 873.8,570.8 873.8,564.0 873.8,578.5 873.9,574.3 873.9,561.5 874.0,572.2 874.0,569.6 874.1,571.1 874.1,573.7 874.2,565.5 874.2,564.1 874.2,559.5 874.3,570.5 874.3,567.5 874.4,554.6 874.4,568.4 874.5,571.2 874.5,569.5 874.6,565.9 874.6,583.6 874.6,563.8 874.7,556.5 874.7,579.9 874.8,556.9 874.8,570.4 874.9,584.8 874.9,564.5 875.0,577.7 875.0,547.2 875.0,566.2 875.1,554.5 875.1,573.4 875.2,563.3 875.2,574.2 875.3,561.4 875.3,569.3 875.4,569.5 875.4,578.8 875.4,574.8 875.5,559.2 875.5,575.7 875.6,567.4 875.6,562.9 875.7,564.7 875.7,575.9 875.7,555.7 875.8,564.4 875.8,559.7 875.9,568.4 875.9,566.0 876.0,559.0 876.0,566.3 876.1,566.6 876.1,565.3 876.1,568.9 876.2,577.3 876.2,568.0 876.3,568.5 876.3,573.0 876.4,566.2 876.4,566.3 876.5,548.3 876.5,562.8 876.5,562.3 876.6,569.3 876.6,525.4 876.7,505.0 876.7,525.5 876.8,575.9 876.8,579.3 876.8,555.7 876.9,562.5 876.9,566.8 877.0,554.0 877.0,562.1 877.1,568.8 877.1,565.7 877.2,553.5 877.2,573.4 877.2,560.5 877.3,567.9 877.3,554.4 877.4,567.1 877.4,574.5 877.5,575.1 877.5,574.6 877.5,571.7 877.6,560.7 877.6,556.6 877.7,578.8 877.7,546.7 877.8,560.5 877.8,573.5 877.9,568.5 877.9,578.1 877.9,564.3 878.0,576.2 878.0,582.6 878.1,563.0 878.1,567.5 878.2,563.5 878.2,566.5 878.2,547.7 878.3,573.7 878.3,575.2 878.4,569.8 878.4,574.5 878.5,560.2 878.5,571.5 878.5,563.5 878.6,576.6 878.6,571.0 878.7,553.5 878.7,568.0 878.8,557.7 878.8,544.4 878.9,576.1 878.9,582.7 878.9,571.7 879.0,572.0 879.0,572.3 879.1,566.4 879.1,584.1 879.2,574.9 879.2,570.0 879.2,568.3 879.3,570.7 879.3,571.9 879.4,569.2 879.4,576.3 879.5,567.9 879.5,577.3 879.5,565.6 879.6,565.3 879.6,559.8 879.7,561.7 879.7,553.4 879.8,558.2 879.8,566.1 879.8,575.5 879.9,561.2 879.9,565.4 880.0,566.8 880.0,567.7 880.1,553.4 880.1,563.9 880.1,582.9 880.2,575.8 880.2,562.9 880.3,569.7 880.3,576.0 880.4,566.5 880.4,573.0 880.4,569.4 880.5,561.7 880.5,568.8 880.6,558.9 880.6,567.7 880.7,570.8 880.7,563.9 880.7,572.0 880.8,570.1 880.8,568.6 880.9,547.4 880.9,561.8 881.0,569.5 881.0,569.4 881.0,576.1 881.1,553.9 881.1,570.5 881.2,565.8 881.2,564.7 881.3,558.3 881.3,583.0 881.3,573.8 881.4,568.6 881.4,572.2 881.5,555.5 881.5,567.3 881.6,570.0 881.6,549.1 881.6,557.3 881.7,565.4 881.7,581.7 881.8,576.0 881.8,571.5 881.9,573.2 881.9,583.0 881.9,572.5 882.0,563.8 882.0,554.9 882.1,584.2 882.1,568.2 882.2,552.0 882.2,564.5 882.2,567.5 882.3,565.2 882.3,553.3 882.4,558.3 882.4,558.0 882.5,577.7 882.5,566.3 882.5,548.2 882.6,573.0 882.6,553.6 882.7,564.1 882.7,571.9 882.8,559.9 882.8,559.6 882.8,553.9 882.9,560.8 882.9,551.4 883.0,570.4 883.0,575.5 883.1,562.7 883.1,583.0 883.1,553.8 883.2,559.4 883.2,553.2 883.3,571.1 883.3,569.4 883.4,583.0 883.4,563.5 883.4,564.0 883.5,553.2 883.5,553.2 883.6,584.6 883.6,561.3 883.6,571.6 883.7,558.9 883.7,569.8 883.8,568.7 883.8,553.4 883.9,572.3 883.9,576.5 883.9,568.1 884.0,573.6 884.0,572.5 884.1,565.3 884.1,572.9 884.2,582.3 884.2,558.7 884.2,570.6 884.3,564.1 884.3,567.2 884.4,564.4 884.4,564.3 884.4,568.4 884.5,562.9 884.5,570.1 884.6,553.1 884.6,574.4 884.7,562.6 884.7,562.1 884.7,576.4 884.8,573.9 884.8,572.8 884.9,572.6 884.9,569.5 885.0,559.7 885.0,572.4 885.0,571.0 885.1,572.7 885.1,566.1 885.2,565.9 885.2,561.7 885.2,545.4 885.3,561.7 885.3,572.0 885.4,563.9 885.4,558.3 885.5,565.5 885.5,556.0 885.5,565.0 885.6,567.2 885.6,560.5 885.7,564.6 885.7,568.5 885.8,567.4 885.8,558.0 885.8,568.5 885.9,561.6 885.9,560.2 886.0,565.5 886.0,564.2 886.0,574.0 886.1,585.3 886.1,563.6 886.2,583.0 886.2,577.5 886.3,553.0 886.3,555.4 886.3,558.9 886.4,576.9 886.4,558.2 886.5,567.0 886.5,565.1 886.5,577.1 886.6,564.3 886.6,571.2 886.7,566.2 886.7,578.4 886.8,571.8 886.8,573.8 886.8,565.3 886.9,566.7 886.9,576.2 887.0,583.0 887.0,566.9 887.0,571.9 887.1,559.7 887.1,580.4 887.2,558.8 887.2,571.6 887.3,571.6 887.3,561.7 887.3,558.4 887.4,566.9 887.4,576.0 887.5,556.5 887.5,564.5 887.5,552.9 887.6,566.3 887.6,558.1 887.7,563.3 887.7,567.5 887.8,561.8 887.8,584.9 887.8,577.0 887.9,577.6 887.9,566.8 888.0,563.8 888.0,573.8 888.0,576.2 888.1,563.4 888.1,567.4 888.2,565.8 888.2,574.0 888.2,563.5 888.3,552.8 888.3,572.6 888.4,575.4 888.4,569.4 888.5,574.7 888.5,567.3 888.5,557.4 888.6,548.1 888.6,563.9 888.7,557.4 888.7,576.7 888.7,567.2 888.8,552.8 888.8,572.3 888.9,568.1 888.9,563.5 888.9,564.1 889.0,571.8 889.0,573.0 889.1,573.4 889.1,577.2 889.2,562.5 889.2,581.1 889.2,583.0 889.3,569.0 889.3,571.8 889.4,572.2 889.4,578.4 889.4,557.3 889.5,577.0 889.5,563.5 889.6,568.3 889.6,571.5 889.6,573.3 889.7,566.5 889.7,571.8 889.8,577.6 889.8,570.2 889.9,578.7 889.9,545.5 889.9,552.7 890.0,566.9 890.0,567.4 890.1,567.4 890.1,554.7 890.1,545.7 890.2,563.9 890.2,567.7 890.3,565.6 890.3,577.6 890.3,571.9 890.4,569.8 890.4,565.6 890.5,554.9 890.5,570.6 890.5,565.1 890.6,570.6 890.6,583.0 890.7,567.6 890.7,583.0 890.8,562.9 890.8,562.8 890.8,559.3 890.9,568.8 890.9,552.6 891.0,569.7 891.0,543.6 891.0,573.9 891.1,527.2 891.1,508.0 891.2,527.2 891.2,568.1 891.2,544.4 891.3,563.5 891.3,566.0 891.4,579.9 891.4,558.0 891.4,577.0 891.5,547.8 891.5,554.8 891.6,554.1 891.6,562.9 891.6,570.7 891.7,564.3 891.7,573.6 891.8,566.0 891.8,556.3 891.8,571.7 891.9,574.1 891.9,565.4 892.0,565.5 892.0,556.1 892.1,574.3 892.1,581.5 892.1,568.3 892.2,556.0 892.2,556.2 892.3,567.0 892.3,556.7 892.3,562.8 892.4,557.6 892.4,568.6 892.5,557.6 892.5,575.3 892.5,580.3 892.6,580.0 892.6,554.6 892.7,578.0 892.7,571.0 892.7,572.8 892.8,571.9 892.8,573.7 892.9,571.5 892.9,569.5 892.9,567.2 893.0,562.5 893.0,576.8 893.1,566.9 893.1,564.7 893.1,575.0 893.2,571.7 893.2,566.7 893.3,567.6 893.3,552.4 893.3,558.1 893.4,564.4 893.4,569.9 893.5,570.8 893.5,557.2 893.5,563.4 893.6,569.3 893.6,574.7 893.7,561.2 893.7,560.2 893.7,556.6 893.8,566.8 893.8,569.9 893.9,575.6 893.9,565.4 893.9,575.2 894.0,568.1 894.0,569.4 894.1,557.1 894.1,581.8 894.1,565.8 894.2,547.9 894.2,573.1 894.3,564.9 894.3,562.5 894.3,573.7 894.4,562.6 894.4,560.8 894.5,560.7 894.5,560.6 894.5,561.7 894.6,579.5 894.6,568.1 894.7,576.7 894.7,571.0 894.7,566.3 894.8,564.4 894.8,558.6 894.9,547.1 894.9,567.7 894.9,567.6 895.0,566.4 895.0,571.8 895.1,562.8 895.1,556.8 895.1,562.2 895.2,552.5 895.2,569.2 895.3,580.5 895.3,563.4 895.3,575.4 895.4,583.0 895.4,565.4 895.5,571.7 895.5,573.3 895.5,580.8 895.6,570.7 895.6,561.6 895.7,551.6 895.7,559.4 895.7,547.9 895.8,572.9 895.8,572.4 895.9,563.1 895.9,572.1 895.9,553.2 896.0,566.8 896.0,578.3 896.1,566.5 896.1,563.9 896.1,577.9 896.2,578.7 896.2,568.0 896.3,552.2 896.3,573.5 896.3,551.9 896.4,542.6 896.4,583.0 896.5,560.3 896.5,576.8 896.5,575.9 896.6,574.5 896.6,561.3 896.7,574.6 896.7,555.8 896.7,567.7 896.8,567.5 896.8,568.3 896.9,558.2 896.9,561.5 896.9,552.7 897.0,582.7 897.0,569.8 897.1,562.1 897.1,570.0 897.1,567.6 897.2,581.1 897.2,562.9 897.2,577.5 897.3,555.5 897.3,566.7 897.4,571.8 897.4,584.0 897.4,576.1 897.5,569.1 897.5,562.8 897.6,563.6 897.6,578.9 897.6,567.6 897.7,564.9 897.7,554.2 897.8,555.5 897.8,559.6 897.8,572.8 897.9,577.4 897.9,561.9 898.0,583.0 898.0,569.4 898.0,568.9 898.1,543.5 898.1,560.7 898.2,576.1 898.2,569.1 898.2,573.3 898.3,554.0 898.3,556.2 898.4,574.4 898.4,579.9 898.4,565.8 898.5,565.5 898.5,567.2 898.5,563.5 898.6,558.1 898.6,558.4 898.7,578.9 898.7,562.9 898.7,574.2 898.8,554.7 898.8,572.5 898.9,578.4 898.9,565.1 898.9,576.6 899.0,570.4 899.0,583.0 899.1,547.8 899.1,565.9 899.1,558.9 899.2,566.9 899.2,574.1 899.3,561.4 899.3,579.3 899.3,563.1 899.4,569.8 899.4,579.4 899.4,563.0 899.5,548.2 899.5,565.7 899.6,561.3 899.6,572.6 899.6,551.7 899.7,558.9 899.7,566.7 899.8,570.2 899.8,560.5 899.8,541.8 899.9,581.5 899.9,572.8 900.0,572.8 900.0,568.9 900.0,577.5 900.1,570.5 900.1,585.8 900.1,567.7 900.2,576.3 900.2,553.7 900.3,562.6 900.3,568.2 900.3,567.8 900.4,562.4 900.4,569.4 900.5,570.7 900.5,583.0 900.5,583.2 900.6,567.3 900.6,558.4 900.7,577.1 900.7,570.9 900.7,572.6 900.8,571.6 900.8,583.0 900.8,564.7 900.9,569.9 900.9,572.2 901.0,558.2 901.0,554.0 901.0,574.6 901.1,568.5 901.1,574.4 901.2,567.2 901.2,565.7 901.2,565.6 901.3,569.4 901.3,564.5 901.3,564.1 901.4,578.4 901.4,576.6 901.5,567.4 901.5,581.5 901.5,563.3 901.6,575.5 901.6,542.7 901.7,565.5 901.7,582.0 901.7,558.0 901.8,548.8 901.8,562.9 901.8,580.0 901.9,570.6 901.9,561.3 902.0,566.4 902.0,561.4 902.0,577.0 902.1,560.9 902.1,560.9 902.2,570.9 902.2,563.4 902.2,569.6 902.3,568.7 902.3,563.2 902.3,554.7 902.4,551.3 902.4,568.5 902.5,564.6 902.5,571.9 902.5,568.9 902.6,566.7 902.6,564.3 902.7,574.6 902.7,551.2 902.7,552.6 902.8,571.1 902.8,566.0 902.8,560.2 902.9,562.7 902.9,573.9 903.0,570.7 903.0,568.3 903.0,552.2 903.1,575.5 903.1,561.0 903.2,544.9 903.2,571.3 903.2,552.6 903.3,555.2 903.3,553.9 903.3,558.3 903.4,572.5 903.4,577.0 903.5,569.1 903.5,565.3 903.5,560.7 903.6,580.0 903.6,566.8 903.7,559.7 903.7,567.1 903.7,571.8 903.8,563.3 903.8,563.0 903.8,553.7 903.9,571.4 903.9,560.5 904.0,572.3 904.0,568.0 904.0,568.6 904.1,561.2 904.1,570.7 904.1,556.9 904.2,568.2 904.2,580.1 904.3,547.3 904.3,557.6 904.3,571.2 904.4,567.3 904.4,563.9 904.5,548.8 904.5,530.8 904.5,514.0 904.6,530.8 904.6,578.7 904.6,569.5 904.7,583.0 904.7,541.0 904.8,583.6 904.8,555.6 904.8,550.9 904.9,568.8 904.9,564.2 904.9,575.5 905.0,559.4 905.0,567.7 905.1,561.0 905.1,570.3 905.1,570.1 905.2,554.3 905.2,567.0 905.2,576.4 905.3,570.3 905.3,577.9 905.4,559.9 905.4,551.9 905.4,560.0 905.5,556.6 905.5,581.3 905.6,568.1 905.6,574.7 905.6,540.7 905.7,569.0 905.7,550.8 905.7,550.8 905.8,573.1 905.8,574.2 905.9,545.0 905.9,570.9 905.9,571.8 906.0,567.9 906.0,555.4 906.0,577.1 906.1,558.0 906.1,571.2 906.2,554.1 906.2,558.9 906.2,574.0 906.3,557.7 906.3,552.9 906.3,565.7 906.4,565.1 906.4,556.6 906.5,569.8 906.5,571.7 906.5,568.6 906.6,581.4 906.6,561.5 906.6,578.1 906.7,565.5 906.7,554.4 906.8,554.9 906.8,552.6 906.8,550.6 906.9,569.3 906.9,551.4 906.9,563.2 907.0,567.1 907.0,564.1 907.1,573.9 907.1,555.7 907.1,558.0 907.2,575.5 907.2,575.2 907.2,565.4 907.3,557.1 907.3,559.4 907.4,572.5 907.4,581.6 907.4,560.2 907.5,564.4 907.5,557.5 907.5,575.4 907.6,566.7 907.6,547.2 907.7,560.1 907.7,576.7 907.7,570.6 907.8,574.7 907.8,563.5 907.8,545.9 907.9,569.3 907.9,568.5 908.0,576.9 908.0,576.6 908.0,554.8 908.1,543.2 908.1,576.9 908.1,562.4 908.2,584.9 908.2,572.2 908.3,567.3 908.3,566.5 908.3,570.1 908.4,563.3 908.4,547.2 908.4,562.2 908.5,568.9 908.5,561.3 908.6,579.3 908.6,570.1 908.6,565.5 908.7,575.0 908.7,569.2 908.7,573.7 908.8,571.5 908.8,554.8 908.8,576.8 908.9,575.2 908.9,540.9 909.0,583.0 909.0,555.1 909.0,575.8 909.1,564.0 909.1,566.0 909.1,574.5 909.2,575.8 909.2,573.9 909.3,554.4 909.3,576.2 909.3,560.8 909.4,565.2 909.4,568.2 909.4,554.3 909.5,576.7 909.5,564.8 909.6,556.7 909.6,560.9 909.6,555.2 909.7,556.2 909.7,569.8 909.7,571.1 909.8,578.2 909.8,583.0 909.9,574.2 909.9,550.1 909.9,573.0 910.0,569.2 910.0,572.7 910.0,574.7 910.1,568.4 910.1,575.2 910.1,573.3 910.2,583.0 910.2,561.0 910.3,557.9 910.3,565.0 910.3,583.0 910.4,550.0 910.4,564.8 910.4,556.5 910.5,565.8 910.5,570.3 910.6,547.9 910.6,583.2 910.6,583.0 910.7,562.5 910.7,574.6 910.7,558.5 910.8,557.0 910.8,573.6 910.8,545.8 910.9,556.7 910.9,572.3 911.0,579.5 911.0,561.5 911.0,552.5 911.1,569.4 911.1,576.1 911.1,566.5 911.2,572.0 911.2,561.8 911.3,569.0 911.3,564.2 911.3,568.3 911.4,573.1 911.4,548.6 911.4,565.4 911.5,552.6 911.5,549.8 911.5,561.3 911.6,566.1 911.6,585.9 911.7,566.5 911.7,563.4 911.7,562.2 911.8,560.6 911.8,565.2 911.8,572.7 911.9,563.6 911.9,551.2 911.9,558.3 912.0,558.0 912.0,567.1 912.1,575.1 912.1,549.5 912.1,540.0 912.2,559.6 912.2,582.9 912.2,559.5 912.3,570.8 912.3,579.9 912.3,561.6 912.4,564.5 912.4,565.4 912.5,567.8 912.5,558.5 912.5,567.1 912.6,560.9 912.6,559.3 912.6,579.5 912.7,552.1 912.7,574.7 912.7,564.0 912.8,565.2 912.8,583.4 912.9,567.1 912.9,548.1 912.9,555.9 913.0,570.9 913.0,549.1 913.0,557.7 913.1,553.3 913.1,562.9 913.1,571.3 913.2,558.6 913.2,568.0 913.3,563.9 913.3,577.2 913.3,548.9 913.4,549.1 913.4,562.7 913.4,548.8 913.5,566.4 913.5,566.8 913.5,556.5 913.6,557.5 913.6,567.4 913.7,568.8 913.7,538.8 913.7,570.5 913.8,558.8 913.8,567.3 913.8,575.3 913.9,574.4 913.9,555.8 913.9,557.4 914.0,557.4 914.0,566.9 914.1,569.1 914.1,553.5 914.1,553.6 914.2,566.6 914.2,548.4 914.2,573.5 914.3,564.4 914.3,556.9 914.3,574.0 914.4,564.5 914.4,558.5 914.5,582.6 914.5,583.2 914.5,565.6 914.6,568.0 914.6,563.8 914.6,570.1 914.7,560.3 914.7,573.1 914.7,566.7 914.8,566.1 914.8,574.4 914.9,554.0 914.9,564.9 914.9,571.1 915.0,574.0 915.0,538.0 915.0,559.1 915.1,573.2 915.1,548.0 915.1,575.1 915.2,548.2 915.2,555.1 915.2,573.8 915.3,564.3 915.3,556.3 915.4,576.4 915.4,567.8 915.4,559.4 915.5,570.4 915.5,568.3 915.5,562.8 915.6,572.0 915.6,569.5 915.6,551.7 915.7,567.0 915.7,567.7 915.7,569.4 915.8,556.3 915.8,574.1 915.9,550.5 915.9,560.2 915.9,561.8 916.0,542.1 916.0,562.9 916.0,566.6 916.1,569.7 916.1,582.5 916.1,561.1 916.2,571.1 916.2,562.5 916.3,564.3 916.3,557.3 916.3,560.3 916.4,577.3 916.4,542.9 916.4,567.6 916.5,553.1 916.5,569.8 916.5,569.6 916.6,568.3 916.6,575.1 916.6,565.0 916.7,559.1 916.7,569.3 916.8,568.9 916.8,581.5 916.8,561.0 916.9,566.1 916.9,537.3 916.9,563.8 917.0,582.4 917.0,582.3 917.0,509.0 917.1,482.0 917.1,509.0 917.1,559.1 917.2,556.9 917.2,576.7 917.3,574.2 917.3,561.2 917.3,558.9 917.4,553.4 917.4,550.8 917.4,573.3 917.5,568.4 917.5,535.8 917.5,551.1 917.6,556.5 917.6,582.6 917.6,552.5 917.7,565.2 917.7,558.9 917.7,546.7 917.8,569.4 917.8,557.1 917.9,546.6 917.9,561.5 917.9,549.7 918.0,572.3 918.0,559.9 918.0,562.6 918.1,574.0 918.1,547.0 918.1,565.2 918.2,573.3 918.2,569.1 918.2,554.2 918.3,567.7 918.3,580.7 918.4,555.0 918.4,558.5 918.4,570.2 918.5,563.9 918.5,562.0 918.5,580.9 918.6,557.3 918.6,572.7 918.6,551.6 918.7,546.2 918.7,563.4 918.7,571.3 918.8,559.5 918.8,580.4 918.8,564.4 918.9,570.0 918.9,566.9 919.0,553.7 919.0,576.2 919.0,578.0 919.1,577.6 919.1,576.1 919.1,577.0 919.2,573.0 919.2,576.6 919.2,567.2 919.3,557.0 919.3,569.0 919.3,573.5 919.4,556.6 919.4,563.7 919.4,536.4 919.5,560.4 919.5,582.1 919.6,570.3 919.6,577.1 919.6,573.1 919.7,575.5 919.7,566.3 919.7,557.2 919.8,543.6 919.8,549.0 919.8,555.8 919.9,545.6 919.9,560.9 919.9,554.0 920.0,557.2 920.0,555.6 920.0,571.4 920.1,557.2 920.1,540.7 920.1,579.9 920.2,560.5 920.2,578.1 920.3,559.5 920.3,561.9 920.3,566.2 920.4,549.8 920.4,579.0 920.4,581.0 920.5,559.4 920.5,574.8 920.5,566.3 920.6,559.0 920.6,580.1 920.6,553.5 920.7,563.2 920.7,573.5 920.7,561.4 920.8,568.3 920.8,550.7 920.8,561.6 920.9,564.7 920.9,550.9 921.0,555.3 921.0,557.2 921.0,560.9 921.1,565.6 921.1,560.3 921.1,547.1 921.2,564.1 921.2,576.6 921.2,563.7 921.3,559.7 921.3,563.4 921.3,569.7 921.4,549.8 921.4,579.5 921.4,560.6 921.5,581.8 921.5,556.7 921.5,543.1 921.6,565.6 921.6,573.5 921.6,568.5 921.7,565.6 921.7,566.7 921.8,565.8 921.8,574.7 921.8,563.1 921.9,570.5 921.9,558.1 921.9,562.0 922.0,556.1 922.0,560.9 922.0,558.5 922.1,548.6 922.1,573.5 922.1,536.3 922.2,569.2 922.2,581.7 922.2,545.2 922.3,567.8 922.3,565.0 922.3,574.8 922.4,557.8 922.4,558.8 922.4,552.8 922.5,570.6 922.5,581.7 922.6,556.0 922.6,565.2 922.6,566.2 922.7,557.1 922.7,545.1 922.7,572.6 922.8,546.7 922.8,574.4 922.8,550.3 922.9,573.1 922.9,576.5 922.9,558.4 923.0,551.8 923.0,537.2 923.0,563.2 923.1,551.5 923.1,560.3 923.1,572.2 923.2,569.4 923.2,575.1 923.2,548.4 923.3,554.5 923.3,562.1 923.3,561.7 923.4,571.8 923.4,550.5 923.5,578.8 923.5,574.2 923.5,570.6 923.6,539.4 923.6,547.4 923.6,549.0 923.7,572.3 923.7,561.4 923.7,581.2 923.8,566.0 923.8,549.4 923.8,574.8 923.9,560.7 923.9,564.0 923.9,569.9 924.0,548.7 924.0,551.2 924.0,577.3 924.1,548.7 924.1,551.1 924.1,549.7 924.2,550.2 924.2,539.8 924.2,557.5 924.3,551.8 924.3,556.8 924.3,565.9 924.4,544.8 924.4,558.3 924.4,560.5 924.5,544.8 924.5,574.3 924.6,564.2 924.6,560.8 924.6,567.9 924.7,565.7 924.7,559.7 924.7,559.7 924.8,550.4 924.8,566.4 924.8,564.2 924.9,551.9 924.9,568.6 924.9,577.5 925.0,549.6 925.0,580.6 925.0,574.8 925.1,572.9 925.1,561.1 925.1,580.0 925.2,560.0 925.2,568.9 925.2,557.2 925.3,549.8 925.3,569.1 925.3,576.6 925.4,549.5 925.4,562.3 925.4,556.0 925.5,553.0 925.5,558.8 925.5,572.8 925.6,577.3 925.6,567.5 925.6,563.9 925.7,570.0 925.7,553.7 925.7,564.8 925.8,557.6 925.8,565.3 925.8,545.6 925.9,567.7 925.9,560.1 926.0,564.9 926.0,565.2 926.0,576.8 926.1,559.7 926.1,547.0 926.1,573.4 926.2,571.5 926.2,557.3 926.2,573.5 926.3,573.5 926.3,550.9 926.3,553.5 926.4,550.3 926.4,578.8 926.4,544.5 926.5,552.7 926.5,566.4 926.5,574.3 926.6,574.0 926.6,566.6 926.6,569.3 926.7,573.8 926.7,567.4 926.7,560.5 926.8,565.2 926.8,568.7 926.8,569.2 926.9,564.9 926.9,554.2 926.9,563.6 927.0,569.3 927.0,551.8 927.0,555.3 927.1,567.1 927.1,569.5 927.1,560.5 927.2,560.4 927.2,563.6 927.2,558.3 927.3,557.9 927.3,544.6 927.3,582.3 927.4,579.3 927.4,555.8 927.4,556.8 927.5,567.5 927.5,570.3 927.5,581.1 927.6,558.1 927.6,567.7 927.6,552.2 927.7,554.2 927.7,555.7 927.7,561.9 927.8,567.6 927.8,565.3 927.8,554.2 927.9,562.8 927.9,551.1 927.9,556.7 928.0,550.8 928.0,560.0 928.1,566.0 928.1,581.0 928.1,555.4 928.2,568.2 928.2,582.7 928.2,559.5 928.3,556.0 928.3,551.2 928.3,564.0 928.4,555.8 928.4,562.0 928.4,571.6 928.5,546.7 928.5,581.7 928.5,555.4 928.6,568.6 928.6,566.4 928.6,560.9 928.7,567.2 928.7,575.9 928.7,563.2 928.8,573.4 928.8,581.1 928.8,563.9 928.9,532.9 928.9,520.0 928.9,532.9 929.0,572.4 929.0,544.5 929.0,561.0 929.1,556.8 929.1,579.9 929.1,553.4 929.2,568.7 929.2,563.6 929.2,571.7 929.3,580.2 929.3,560.2 929.3,549.9 929.4,576.5 929.4,556.1 929.4,564.5 929.5,569.8 929.5,548.0 929.5,557.2 929.6,565.3 929.6,556.8 929.6,581.1 929.7,549.9 929.7,571.2 929.7,557.2 929.8,563.8 929.8,555.9 929.8,567.9 929.9,574.2 929.9,568.4 929.9,562.2 930.0,545.1 930.0,565.4 930.0,545.1 930.1,538.0 930.1,552.4 930.1,535.6 930.2,547.4 930.2,563.2 930.2,554.8 930.3,563.8 930.3,540.3 930.3,570.4 930.4,578.0 930.4,563.8 930.4,553.1 930.5,550.1 930.5,555.1 930.5,573.6 930.6,534.7 930.6,547.6 930.6,581.5 930.7,578.8 930.7,577.7 930.7,556.5 930.8,570.9 930.8,554.1 930.8,558.3 930.9,569.2 930.9,551.9 930.9,563.0 931.0,550.2 931.0,571.9 931.0,559.2 931.1,564.6 931.1,565.4 931.1,554.8 931.2,557.2 931.2,555.2 931.2,545.9 931.3,564.9 931.3,571.9 931.3,573.9 931.4,562.6 931.4,539.0 931.4,554.3 931.5,560.8 931.5,546.1 931.5,557.1 931.6,567.8 931.6,548.4 931.6,539.1 931.7,581.7 931.7,572.0 931.7,564.6 931.8,576.2 931.8,571.1 931.8,558.8 931.9,581.7 931.9,573.5 931.9,573.5 932.0,574.6 932.0,555.8 932.0,562.5 932.1,571.8 932.1,560.9 932.1,564.5 932.1,559.3 932.2,559.2 932.2,543.1 932.2,560.0 932.3,577.9 932.3,583.1 932.3,549.6 932.4,556.3 932.4,557.4 932.4,577.6 932.5,561.8 932.5,572.6 932.5,576.5 932.6,567.2 932.6,556.9 932.6,565.7 932.7,572.4 932.7,563.6 932.7,571.8 932.8,557.9 932.8,551.4 932.8,559.7 932.9,566.8 932.9,549.7 932.9,566.7 933.0,558.7 933.0,549.9 933.0,567.2 933.1,578.2 933.1,550.6 933.1,582.2 933.2,565.5 933.2,556.4 933.2,567.6 933.3,547.3 933.3,566.3 933.3,565.2 933.4,547.4 933.4,547.5 933.4,552.9 933.5,559.9 933.5,567.0 933.5,561.0 933.6,554.9 933.6,569.8 933.6,568.3 933.7,564.0 933.7,559.5 933.7,552.8 933.8,562.4 933.8,579.2 933.8,569.6 933.9,575.4 933.9,550.3 933.9,567.1 934.0,552.5 934.0,570.0 934.0,568.4 934.1,568.7 934.1,577.4 934.1,561.4 934.2,577.0 934.2,566.6 934.2,559.1 934.2,562.6 934.3,573.0 934.3,559.9 934.3,572.7 934.4,568.1 934.4,559.4 934.4,548.6 934.5,565.7 934.5,574.9 934.5,560.7 934.6,573.8 934.6,557.1 934.6,577.8 934.7,582.8 934.7,569.0 934.7,571.5 934.8,553.3 934.8,581.4 934.8,559.8 934.9,573.2 934.9,585.3 934.9,571.0 935.0,570.1 935.0,544.7 935.0,561.2 935.1,561.3 935.1,579.5 935.1,560.0 935.2,564.0 935.2,553.8 935.2,588.4 935.3,557.3 935.3,565.7 935.3,564.9 935.4,567.1 935.4,560.6 935.4,564.8 935.5,579.3 935.5,577.4 935.5,574.0 935.5,573.4 935.6,551.5 935.6,547.5 935.6,571.0 935.7,570.9 935.7,574.0 935.7,555.3 935.8,572.6 935.8,562.8 935.8,571.4 935.9,540.5 935.9,574.1 935.9,568.2 936.0,559.8 936.0,578.4 936.0,550.3 936.1,560.7 936.1,550.3 936.1,566.8 936.2,560.6 936.2,563.2 936.2,558.3 936.3,587.7 936.3,577.0 936.3,576.5 936.4,562.0 936.4,577.0 936.4,568.8 936.5,565.5 936.5,553.3 936.5,570.0 936.6,550.8 936.6,547.0 936.6,550.9 936.6,573.1 936.7,575.0 936.7,578.1 936.7,545.9 936.8,580.1 936.8,588.7 936.8,563.9 936.9,560.0 936.9,563.1 936.9,563.3 937.0,578.6 937.0,563.4 937.0,573.7 937.1,569.3 937.1,559.7 937.1,570.0 937.2,569.9 937.2,571.1 937.2,572.7 937.3,566.3 937.3,573.9 937.3,551.6 937.4,564.2 937.4,582.9 937.4,572.9 937.5,566.6 937.5,561.6 937.5,563.1 937.5,568.1 937.6,551.4 937.6,565.7 937.6,567.4 937.7,551.5 937.7,539.6 937.7,568.3 937.8,566.1 937.8,543.4 937.8,589.3 937.9,551.5 937.9,562.4 937.9,582.0 938.0,573.2 938.0,584.6 938.0,582.7 938.1,568.5 938.1,581.6 938.1,569.1 938.2,556.9 938.2,571.4 938.2,583.4 938.3,578.7 938.3,566.0 938.3,585.1 938.3,584.1 938.4,584.3 938.4,551.6 938.4,561.4 938.5,563.7 938.5,562.9 938.5,551.7 938.6,564.1 938.6,582.0 938.6,559.5 938.7,589.7 938.7,559.7 938.7,574.2 938.8,568.0 938.8,557.5 938.8,572.7 938.9,571.9 938.9,569.3 938.9,582.7 939.0,578.4 939.0,554.1 939.0,584.0 939.0,560.9 939.1,551.8 939.1,579.0 939.1,582.3 939.2,561.0 939.2,570.9 939.2,563.1 939.3,577.0 939.3,565.3 939.3,573.1 939.4,557.3 939.4,576.3 939.4,571.0 939.5,590.0 939.5,584.6 939.5,564.7 939.6,557.3 939.6,578.1 939.6,561.5 939.7,578.5 939.7,581.6 939.7,586.4 939.7,586.5 939.8,583.4 939.8,570.5 939.8,570.2 939.9,572.8 939.9,587.7 939.9,566.8 940.0,570.8 940.0,579.7 940.0,558.1 940.1,566.8 940.1,571.2 940.1,566.5 940.2,565.1 940.2,575.0 940.2,560.9 940.3,576.5 940.3,567.5 940.3,554.1 940.3,547.4 940.4,559.8 940.4,575.4 940.4,568.6 940.5,547.6 940.5,569.9 940.5,574.6 940.6,567.8 940.6,560.1 940.6,584.6 940.7,570.1 940.7,540.1 940.7,564.1 940.8,572.4 940.8,581.6 940.8,541.9 940.9,568.6 940.9,567.1 940.9,558.7 940.9,588.7 941.0,558.3 941.0,576.0 941.0,563.1 941.1,569.0 941.1,565.6 941.1,563.7 941.2,569.9 941.2,552.3 941.2,561.0 941.3,572.6 941.3,587.7 941.3,570.6 941.4,561.0 941.4,579.9 941.4,540.3 941.5,558.4 941.5,562.7 941.5,557.5 941.5,581.9 941.6,558.4 941.6,557.7 941.6,571.9 941.7,580.2 941.7,563.7 941.7,577.8 941.8,556.0 941.8,578.0 941.8,571.9 941.9,570.5 941.9,552.5 941.9,580.3 942.0,543.0 942.0,572.0 942.0,558.7 942.0,584.9 942.1,565.6 942.1,574.3 942.1,568.5 942.2,567.1 942.2,577.2 942.2,575.5 942.3,583.9 942.3,564.9 942.3,578.9 942.4,560.3 942.4,571.5 942.4,552.9 942.5,570.7 942.5,568.7 942.5,563.3 942.5,563.4 942.6,568.7 942.6,582.7 942.6,569.7 942.7,571.4 942.7,575.2 942.7,585.4 942.8,582.6 942.8,576.6 942.8,553.2 942.9,577.8 942.9,564.6 942.9,576.1 943.0,563.2 943.0,577.3 943.0,567.1 943.0,566.7 943.1,573.7 943.1,556.3 943.1,583.6 943.2,571.1 943.2,544.2 943.2,561.7 943.3,578.6 943.3,560.1 943.3,582.9 943.4,562.5 943.4,572.1 943.4,563.6 943.5,571.9 943.5,579.9 943.5,564.9 943.5,559.0 943.6,569.0 943.6,562.9 943.6,573.7 943.7,558.5 943.7,565.7 943.7,579.3 943.8,573.0 943.8,560.5 943.8,568.0 943.9,573.5 943.9,579.4 943.9,561.3 944.0,573.0 944.0,561.6 944.0,554.7 944.0,582.3 944.1,578.0 944.1,578.7 944.1,581.1 944.2,592.8 944.2,585.6 944.2,580.9 944.3,564.1 944.3,567.2 944.3,554.6 944.4,553.1 944.4,578.8 944.4,544.2 944.4,563.0 944.5,578.3 944.5,571.5 944.5,556.2 944.6,578.0 944.6,577.2 944.6,577.8 944.7,564.0 944.7,556.6 944.7,576.0 944.8,584.0 944.8,592.2 944.8,553.2 944.8,567.3 944.9,582.4 944.9,578.4 944.9,583.6 945.0,558.4 945.0,559.0 945.0,579.5 945.1,553.2 945.1,566.7 945.1,555.0 945.2,573.6 945.2,569.5 945.2,588.4 945.2,569.3 945.3,586.9 945.3,575.7 945.3,568.6 945.4,556.6 945.4,578.6 945.4,565.9 945.5,591.6 945.5,571.4 945.5,578.2 945.6,579.8 945.6,553.4 945.6,565.5 945.6,574.4 945.7,577.7 945.7,571.8 945.7,588.6 945.8,552.9 945.8,582.6 945.8,586.8 945.9,557.6 945.9,583.2 945.9,571.0 946.0,557.5 946.0,581.1 946.0,588.2 946.0,583.7 946.1,579.7 946.1,568.8 946.1,592.6 946.2,579.7 946.2,569.1 946.2,561.7 946.3,572.5 946.3,555.1 946.3,583.3 946.4,584.0 946.4,569.9 946.4,556.8 946.4,565.8 946.5,591.8 946.5,590.4 946.5,580.2 946.6,590.5 946.6,583.8 946.6,568.2 946.7,565.7 946.7,580.7 946.7,585.8 946.8,553.5 946.8,573.5 946.8,562.4 946.8,553.5 946.9,566.1 946.9,573.8 946.9,576.3 947.0,574.9 947.0,580.0 947.0,569.1 947.1,561.3 947.1,592.6 947.1,592.6 947.2,560.4 947.2,562.4 947.2,559.6 947.2,574.1 947.3,573.0 947.3,564.3 947.3,574.8 947.4,575.9 947.4,578.4 947.4,572.8 947.5,568.3 947.5,573.9 947.5,553.6 947.5,570.2 947.6,553.6 947.6,575.8 947.6,578.0 947.7,572.8 947.7,570.4 947.7,592.7 947.8,588.5 947.8,586.2 947.8,574.4 947.9,583.4 947.9,571.6 947.9,582.6 947.9,554.0 948.0,579.5 948.0,555.9 948.0,573.4 948.1,576.1 948.1,588.7 948.1,571.9 948.2,566.6 948.2,579.7 948.2,581.8 948.2,577.2 948.3,569.7 948.3,579.5 948.3,561.7 948.4,574.0 948.4,566.8 948.4,582.4 948.5,544.4 948.5,587.9 948.5,591.0 948.6,573.9 948.6,559.8 948.6,578.4 948.6,569.4 948.7,574.6 948.7,579.1 948.7,579.1 948.8,577.0 948.8,555.1 948.8,573.8 948.9,564.8 948.9,577.3 948.9,553.7 948.9,562.9 949.0,566.5 949.0,555.4 949.0,575.9 949.1,580.3 949.1,581.1 949.1,570.6 949.2,566.7 949.2,585.7 949.2,566.0 949.2,591.2 949.3,581.8 949.3,569.2 949.3,588.6 949.4,586.7 949.4,553.8 949.4,574.6 949.5,570.3 949.5,571.3 949.5,592.9 949.5,587.2 949.6,592.9 949.6,584.9 949.6,574.0 949.7,565.8 949.7,579.6 949.7,581.4 949.8,572.1 949.8,569.5 949.8,582.8 949.8,575.4 949.9,592.9 949.9,568.7 949.9,581.2 950.0,577.9 950.0,592.9 950.0,545.0 950.1,568.3 950.1,577.2 950.1,571.7 950.1,589.4 950.2,584.3 950.2,579.2 950.2,574.3 950.3,553.9 950.3,561.4 950.3,568.8 950.4,562.9 950.4,582.3 950.4,592.8 950.5,567.7 950.5,562.7 950.5,575.5 950.5,592.6 950.6,571.9 950.6,565.1 950.6,578.7 950.7,559.6 950.7,562.2 950.7,577.0 950.8,561.2 950.8,572.8 950.8,571.5 950.8,561.3 950.9,579.8 950.9,593.0 950.9,580.0 951.0,566.0 951.0,569.1 951.0,580.4 951.0,570.5 951.1,568.2 951.1,565.9 951.1,574.7 951.2,575.9 951.2,571.2 951.2,580.2 951.3,582.6 951.3,589.4 951.3,577.3 951.3,578.3 951.4,579.2 951.4,570.1 951.4,583.2 951.5,554.5 951.5,580.4 951.5,568.3 951.6,576.5 951.6,588.7 951.6,586.9 951.6,593.1 951.7,554.0 951.7,583.8 951.7,571.8 951.8,587.9 951.8,567.2 951.8,579.8 951.9,566.9 951.9,569.9 951.9,559.0 951.9,575.1 952.0,568.2 952.0,568.9 952.0,593.1 952.1,565.0 952.1,586.2 952.1,571.3 952.2,571.4 952.2,576.3 952.2,569.6 952.2,593.1 952.3,564.4 952.3,570.5 952.3,575.1 952.4,586.1 952.4,581.7 952.4,580.2 952.5,570.7 952.5,575.9 952.5,587.6 952.5,589.6 952.6,564.5 952.6,554.1 952.6,585.8 952.7,576.5 952.7,578.6 952.7,563.5 952.7,578.7 952.8,579.9 952.8,590.2 952.8,593.2 952.9,577.4 952.9,577.2 952.9,575.2 953.0,577.1 953.0,554.2 953.0,570.1 953.0,570.1 953.1,593.2 953.1,583.7 953.1,567.4 953.2,568.7 953.2,566.7 953.2,560.4 953.3,580.6 953.3,584.2 953.3,570.3 953.3,543.0 953.4,574.2 953.4,583.5 953.4,571.1 953.5,561.0 953.5,571.7 953.5,593.3 953.5,577.5 953.6,581.3 953.6,566.0 953.6,576.4 953.7,563.3 953.7,579.6 953.7,555.7 953.8,556.8 953.8,593.3 953.8,569.9 953.8,583.8 953.9,568.3 953.9,584.1 953.9,562.4 954.0,561.7 954.0,587.0 954.0,580.8 954.0,554.3 954.1,564.7 954.1,574.8 954.1,591.8 954.2,576.1 954.2,574.8 954.2,560.1 954.3,588.5 954.3,584.3 954.3,554.3 954.3,577.5 954.4,554.3 954.4,573.4 954.4,564.6 954.5,576.5 954.5,557.5 954.5,579.0 954.5,560.1 954.6,570.2 954.6,564.4 954.6,562.8 954.7,586.3 954.7,574.5 954.7,587.6 954.8,572.3 954.8,577.6 954.8,588.9 954.8,572.0 954.9,568.7 954.9,563.8 954.9,567.7 955.0,583.2 955.0,577.8 955.0,572.9 955.0,577.1 955.1,582.4 955.1,582.3 955.1,563.5 955.2,564.0 955.2,592.4 955.2,573.8 955.3,581.5 955.3,568.0 955.3,560.5 955.3,565.1 955.4,584.8 955.4,568.8 955.4,585.0 955.5,579.2 955.5,560.1 955.5,564.7 955.5,576.1 955.6,590.6 955.6,581.9 955.6,554.5 955.7,579.6 955.7,571.1 955.7,576.0 955.7,583.1 955.8,562.8 955.8,585.2 955.8,571.7 955.9,563.0 955.9,579.8 955.9,563.8 956.0,543.4 956.0,565.6 956.0,579.5 956.0,584.9 956.1,568.5 956.1,593.5 956.1,572.2 956.2,579.6 956.2,577.2 956.2,573.5 956.2,561.3 956.3,575.1 956.3,543.2 956.3,565.2 956.4,562.2 956.4,576.5 956.4,568.8 956.4,574.5 956.5,567.3 956.5,559.5 956.5,562.2 956.6,587.1 956.6,595.3 956.6,576.9 956.7,580.2 956.7,561.1 956.7,582.9 956.7,556.4 956.8,567.2 956.8,566.6 956.8,567.6 956.9,554.6 956.9,584.6 956.9,554.9 956.9,582.4 957.0,577.4 957.0,575.9 957.0,570.7 957.1,567.8 957.1,564.8 957.1,588.2 957.1,568.6 957.2,564.6 957.2,583.1 957.2,593.6 957.3,559.9 957.3,572.1 957.3,571.8 957.3,561.8 957.4,560.4 957.4,578.6 957.4,571.8 957.5,580.8 957.5,557.6 957.5,560.1 957.6,563.9 957.6,571.3 957.6,575.7 957.6,549.3 957.7,549.4 957.7,564.1 957.7,590.0 957.8,564.8 957.8,576.5 957.8,567.6 957.8,576.7 957.9,581.6 957.9,554.7 957.9,570.1 958.0,587.8 958.0,564.1 958.0,564.9 958.0,574.3 958.1,578.5 958.1,557.2 958.1,583.7 958.2,572.9 958.2,574.1 958.2,576.1 958.2,571.5 958.3,584.3 958.3,572.1 958.3,577.6 958.4,572.5 958.4,576.8 958.4,575.1 958.4,560.7 958.5,582.0 958.5,561.5 958.5,580.3 958.6,576.9 958.6,562.6 958.6,574.1 958.6,570.0 958.7,575.9 958.7,564.6 958.7,584.7 958.8,575.5 958.8,584.9 958.8,567.8 958.8,543.9 958.9,577.8 958.9,559.3 958.9,567.2 959.0,589.0 959.0,567.6 959.0,574.9 959.1,559.0 959.1,584.1 959.1,561.4 959.1,561.2 959.2,576.2 959.2,554.4 959.2,554.9 959.3,562.4 959.3,576.5 959.3,568.9 959.3,578.5 959.4,581.6 959.4,579.5 959.4,588.8 959.5,575.0 959.5,587.4 959.5,570.6 959.5,548.0 959.6,583.3 959.6,585.1 959.6,593.9 959.7,577.7 959.7,580.9 959.7,584.3 959.7,584.7 959.8,581.5 959.8,581.9 959.8,545.4 959.9,568.2 959.9,560.3 959.9,575.3 959.9,567.6 960.0,559.0 960.0,590.6 960.0,586.0 960.1,576.6 960.1,561.6 960.1,573.9 960.1,575.3 960.2,569.5 960.2,589.9 960.2,584.9 960.3,562.6 960.3,578.8 960.3,556.8 960.3,579.5 960.4,543.8 960.4,589.3 960.4,555.0 960.5,591.0 960.5,564.7 960.5,582.3 960.5,564.2"/></g>
<defs><clipPath id="clp"><rect x="66" y="47" width="894" height="570"/></clipPath></defs>
</svg>
<div class="t" style="left:66px;top:26.5px;font-size:16.5px;line-height:16.5px;letter-spacing:-0.39px">Spectrum magnitude dBFS</div>
<div class="t" style="right:63.8px;top:27.3px">Left  Avg:26</div>
<div class="t" style="left:965px;top:47.5px;font-size:16px;line-height:16px;letter-spacing:0;text-align:center;width:12px">A<br>R<br>T<br>A</div>
<div class="yl" style="top:39.17px">0.0</div><div class="yl" style="top:121.17px">-20.0</div><div class="yl" style="top:202.17px">-40.0</div><div class="yl" style="top:284.17px">-60.0</div><div class="yl" style="top:365.17px">-80.0</div><div class="yl" style="top:447.17px">-100.0</div><div class="yl" style="top:528.17px">-120.0</div><div class="yl" style="top:610.17px">-140.0</div>
<div class="xl" style="left:24.5px">200</div><div class="xl" style="left:202.5px">500</div><div class="xl" style="left:337.5px">1k</div><div class="xl" style="left:472.5px">2k</div><div class="xl" style="left:650.5px">5k</div><div class="xl" style="left:785.5px">10k</div><div class="xl" style="left:920.5px">20k</div>
<div class="t" style="left:64px;top:643.3px">Cursor: 200.68 Hz, -104.84 dB</div>
<div class="t" style="left:64px;top:663.3px;color:#b41e2c;letter-spacing:-0.5px">IMD =1.37%  DFD2 =0.37%  DFD3 =0.49%</div>
<div class="t" style="left:64px;top:681.3px">Peerless DFM2535</div>
<div class="t" style="right:63.5px;top:643.3px;letter-spacing:-0.3px">Frequency(Hz)</div>
</body></html>
